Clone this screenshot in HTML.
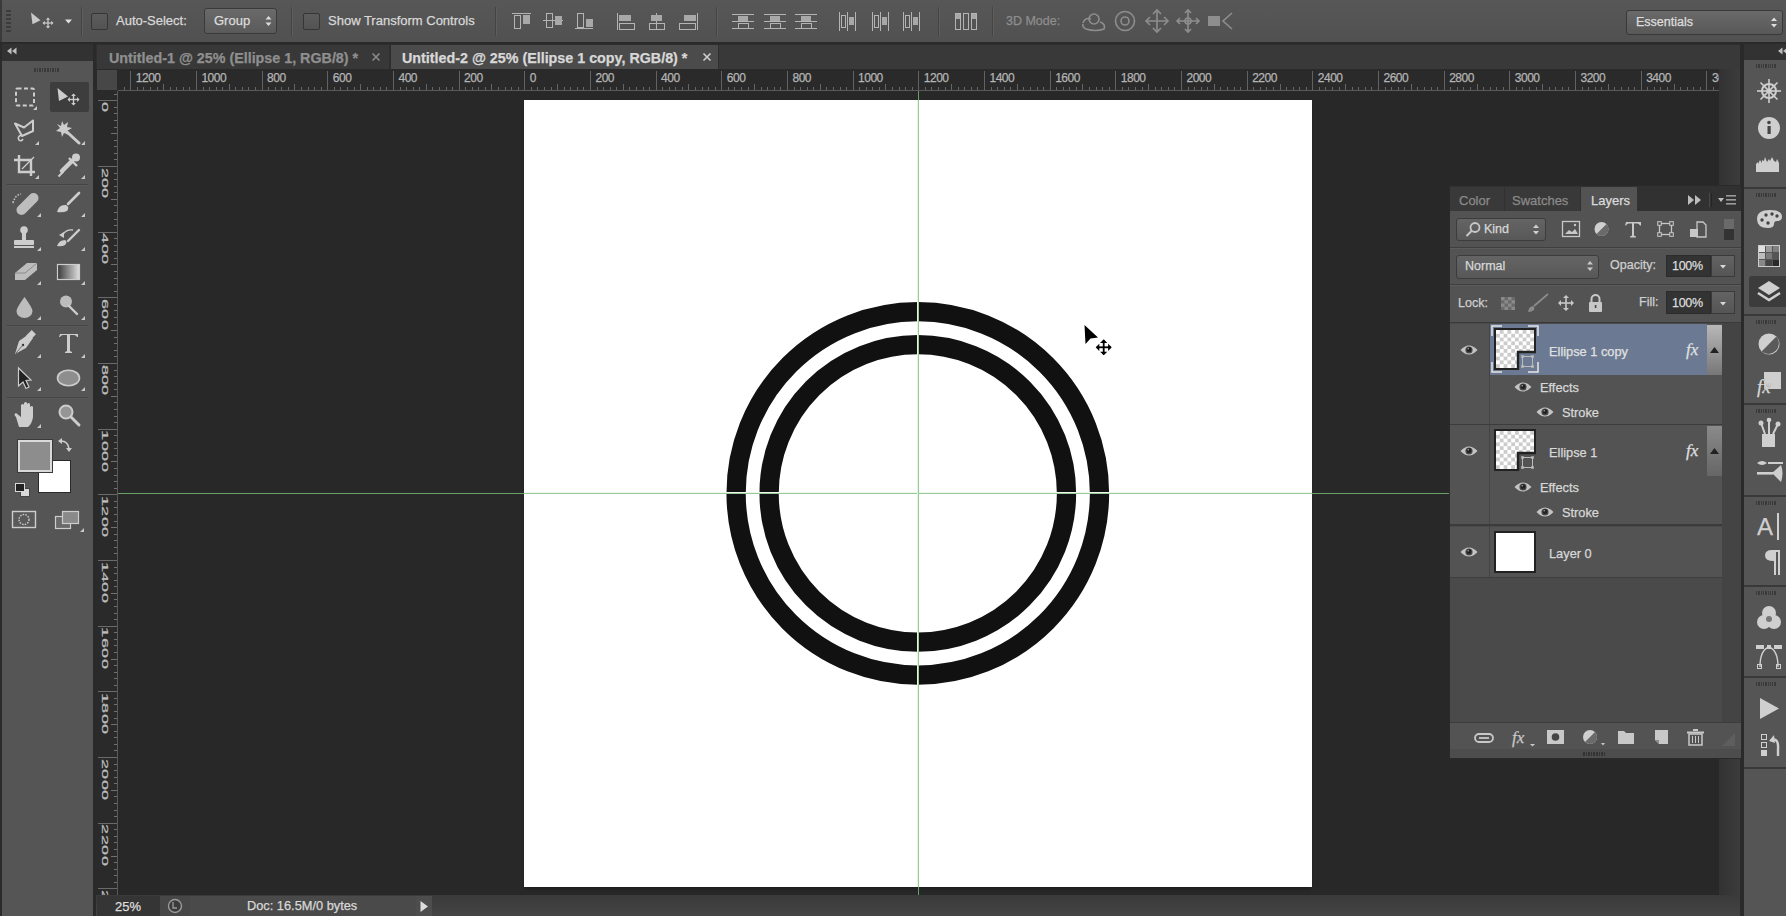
<!DOCTYPE html>
<html><head><meta charset="utf-8">
<style>
*{box-sizing:border-box;margin:0;padding:0}
html,body{width:1786px;height:916px;overflow:hidden;background:#282828;font-family:"Liberation Sans",sans-serif;color:#d6d6d6}
.a{position:absolute}
.t{position:absolute;white-space:nowrap;line-height:1;-webkit-text-stroke:0.25px currentColor}
svg{position:absolute;overflow:visible}
</style></head><body>
<div class="a" style="left:0px;top:0px;width:1786px;height:42px;background:linear-gradient(#575757,#515151);"></div>
<div class="a" style="left:0px;top:0px;width:2px;height:42px;background:#3a3a3a;"></div>
<div class="a" style="left:0px;top:42px;width:1786px;height:2px;background:#2a2a2a;"></div>
<div class="a" style="left:6px;top:10px;width:5px;height:2px;background:#3c3c3c;"></div>
<div class="a" style="left:6px;top:14px;width:5px;height:2px;background:#3c3c3c;"></div>
<div class="a" style="left:6px;top:18px;width:5px;height:2px;background:#3c3c3c;"></div>
<div class="a" style="left:6px;top:22px;width:5px;height:2px;background:#3c3c3c;"></div>
<div class="a" style="left:6px;top:26px;width:5px;height:2px;background:#3c3c3c;"></div>
<div class="a" style="left:6px;top:30px;width:5px;height:2px;background:#3c3c3c;"></div>
<div class="a" style="left:81px;top:7px;width:1px;height:29px;background:#444;"></div>
<div class="a" style="left:82px;top:7px;width:1px;height:29px;background:#5e5e5e;"></div>
<div class="a" style="left:291px;top:7px;width:1px;height:29px;background:#444;"></div>
<div class="a" style="left:292px;top:7px;width:1px;height:29px;background:#5e5e5e;"></div>
<div class="a" style="left:495px;top:7px;width:1px;height:29px;background:#444;"></div>
<div class="a" style="left:496px;top:7px;width:1px;height:29px;background:#5e5e5e;"></div>
<div class="a" style="left:716px;top:7px;width:1px;height:29px;background:#444;"></div>
<div class="a" style="left:717px;top:7px;width:1px;height:29px;background:#5e5e5e;"></div>
<div class="a" style="left:938px;top:7px;width:1px;height:29px;background:#444;"></div>
<div class="a" style="left:939px;top:7px;width:1px;height:29px;background:#5e5e5e;"></div>
<div class="a" style="left:992px;top:7px;width:1px;height:29px;background:#444;"></div>
<div class="a" style="left:993px;top:7px;width:1px;height:29px;background:#5e5e5e;"></div>
<div class="a" style="left:91px;top:13px;width:17px;height:17px;background:linear-gradient(#5c5c5c,#535353);border:1px solid #353535;border-radius:2px"></div>
<div class="a" style="left:303px;top:13px;width:17px;height:17px;background:linear-gradient(#5c5c5c,#535353);border:1px solid #353535;border-radius:2px"></div>
<div class="t" style="left:116px;top:14px;font-size:13px;color:#d8d8d8;font-weight:400;">Auto-Select:</div>
<div class="a" style="left:204px;top:8px;width:73px;height:26px;background:linear-gradient(#6a6a6a,#5a5a5a);border:1px solid #3a3a3a;border-radius:3px"></div>
<div class="t" style="left:214px;top:14px;font-size:13px;color:#dcdcdc;font-weight:400;">Group</div>
<div class="t" style="left:328px;top:14px;font-size:13px;color:#d8d8d8;font-weight:400;">Show Transform Controls</div>
<div class="t" style="left:1006px;top:15px;font-size:12.5px;color:#8e8e8e;font-weight:400;">3D Mode:</div>
<div class="a" style="left:1626px;top:10px;width:157px;height:25px;background:linear-gradient(#6a6a6a,#585858);border:1px solid #383838;border-radius:3px"></div>
<div class="t" style="left:1636px;top:16px;font-size:12.5px;color:#dedede;font-weight:400;">Essentials</div>
<div class="a" style="left:0px;top:44px;width:2px;height:872px;background:#2b2b2b;"></div>
<div class="a" style="left:2px;top:44px;width:91px;height:17px;background:#323232;"></div>
<div class="a" style="left:2px;top:61px;width:91px;height:855px;background:#555555;"></div>
<div class="a" style="left:93px;top:44px;width:3px;height:872px;background:#2a2a2a;"></div>
<div class="a" style="left:34.0px;top:68px;width:1.6px;height:4px;background:#3a3a3a;"></div>
<div class="a" style="left:36.6px;top:68px;width:1.6px;height:4px;background:#3a3a3a;"></div>
<div class="a" style="left:39.2px;top:68px;width:1.6px;height:4px;background:#3a3a3a;"></div>
<div class="a" style="left:41.8px;top:68px;width:1.6px;height:4px;background:#3a3a3a;"></div>
<div class="a" style="left:44.4px;top:68px;width:1.6px;height:4px;background:#3a3a3a;"></div>
<div class="a" style="left:47.0px;top:68px;width:1.6px;height:4px;background:#3a3a3a;"></div>
<div class="a" style="left:49.6px;top:68px;width:1.6px;height:4px;background:#3a3a3a;"></div>
<div class="a" style="left:52.2px;top:68px;width:1.6px;height:4px;background:#3a3a3a;"></div>
<div class="a" style="left:54.8px;top:68px;width:1.6px;height:4px;background:#3a3a3a;"></div>
<div class="a" style="left:57.400000000000006px;top:68px;width:1.6px;height:4px;background:#3a3a3a;"></div>
<div class="a" style="left:50px;top:82px;width:39px;height:30px;background:#3d3d3d;border-radius:2px"></div>
<div class="a" style="left:7px;top:184px;width:81px;height:1px;background:#444;"></div>
<div class="a" style="left:7px;top:185px;width:81px;height:1px;background:#5a5a5a;"></div>
<div class="a" style="left:7px;top:325px;width:81px;height:1px;background:#444;"></div>
<div class="a" style="left:7px;top:326px;width:81px;height:1px;background:#5a5a5a;"></div>
<div class="a" style="left:7px;top:397px;width:81px;height:1px;background:#444;"></div>
<div class="a" style="left:7px;top:398px;width:81px;height:1px;background:#5a5a5a;"></div>
<div class="a" style="left:96px;top:44px;width:1644px;height:25px;background:#393939;"></div>
<div class="a" style="left:96px;top:44px;width:1644px;height:1px;background:#2e2e2e;"></div>
<div class="a" style="left:96px;top:44px;width:1px;height:25px;background:#2e2e2e;"></div>
<div class="a" style="left:97px;top:45px;width:292px;height:24px;background:#383838;"></div>
<div class="a" style="left:389px;top:45px;width:2px;height:24px;background:#2f2f2f;"></div>
<div class="a" style="left:391px;top:45px;width:327px;height:24px;background:#4b4b4b;"></div>
<div class="a" style="left:718px;top:45px;width:1px;height:24px;background:#2f2f2f;"></div>
<div class="t" style="left:109px;top:51px;font-size:14.3px;color:#8f8f8f;font-weight:700;">Untitled-1 @ 25% (Ellipse 1, RGB/8) *</div>
<div class="t" style="left:402px;top:51px;font-size:14.3px;color:#d8d8d8;font-weight:700;">Untitled-2 @ 25% (Ellipse 1 copy, RGB/8) *</div>
<div class="a" style="left:96px;top:69px;width:1623px;height:22px;background:#2a2a2a;"></div>
<div class="a" style="left:97px;top:70px;width:20px;height:20px;background:#474747;"></div>
<div class="a" style="left:96px;top:91px;width:22px;height:804px;background:#2a2a2a;"></div>
<div class="a" style="left:118px;top:90px;width:1601px;height:1px;background:#5a5a5a;"></div>
<div class="a" style="left:117px;top:91px;width:1px;height:804px;background:#5a5a5a;"></div>
<div class="a" style="left:123.71px;top:87px;width:1px;height:3px;background:#666666;"></div>
<div class="a" style="left:130.28px;top:71px;width:1px;height:19px;background:#626262;"></div>
<div class="a" style="left:136.85px;top:87px;width:1px;height:3px;background:#666666;"></div>
<div class="a" style="left:143.41px;top:87px;width:1px;height:3px;background:#666666;"></div>
<div class="a" style="left:149.98px;top:87px;width:1px;height:3px;background:#666666;"></div>
<div class="a" style="left:156.55px;top:87px;width:1px;height:3px;background:#666666;"></div>
<div class="a" style="left:163.11px;top:84px;width:1px;height:6px;background:#666666;"></div>
<div class="a" style="left:169.68px;top:87px;width:1px;height:3px;background:#666666;"></div>
<div class="a" style="left:176.25px;top:87px;width:1px;height:3px;background:#666666;"></div>
<div class="a" style="left:182.82px;top:87px;width:1px;height:3px;background:#666666;"></div>
<div class="a" style="left:189.38px;top:87px;width:1px;height:3px;background:#666666;"></div>
<div class="a" style="left:195.95px;top:71px;width:1px;height:19px;background:#626262;"></div>
<div class="a" style="left:202.52px;top:87px;width:1px;height:3px;background:#666666;"></div>
<div class="a" style="left:209.08px;top:87px;width:1px;height:3px;background:#666666;"></div>
<div class="a" style="left:215.65px;top:87px;width:1px;height:3px;background:#666666;"></div>
<div class="a" style="left:222.22px;top:87px;width:1px;height:3px;background:#666666;"></div>
<div class="a" style="left:228.78px;top:84px;width:1px;height:6px;background:#666666;"></div>
<div class="a" style="left:235.35px;top:87px;width:1px;height:3px;background:#666666;"></div>
<div class="a" style="left:241.92px;top:87px;width:1px;height:3px;background:#666666;"></div>
<div class="a" style="left:248.49px;top:87px;width:1px;height:3px;background:#666666;"></div>
<div class="a" style="left:255.05px;top:87px;width:1px;height:3px;background:#666666;"></div>
<div class="a" style="left:261.62px;top:71px;width:1px;height:19px;background:#626262;"></div>
<div class="a" style="left:268.19px;top:87px;width:1px;height:3px;background:#666666;"></div>
<div class="a" style="left:274.75px;top:87px;width:1px;height:3px;background:#666666;"></div>
<div class="a" style="left:281.32px;top:87px;width:1px;height:3px;background:#666666;"></div>
<div class="a" style="left:287.89px;top:87px;width:1px;height:3px;background:#666666;"></div>
<div class="a" style="left:294.45px;top:84px;width:1px;height:6px;background:#666666;"></div>
<div class="a" style="left:301.02px;top:87px;width:1px;height:3px;background:#666666;"></div>
<div class="a" style="left:307.59px;top:87px;width:1px;height:3px;background:#666666;"></div>
<div class="a" style="left:314.16px;top:87px;width:1px;height:3px;background:#666666;"></div>
<div class="a" style="left:320.72px;top:87px;width:1px;height:3px;background:#666666;"></div>
<div class="a" style="left:327.29px;top:71px;width:1px;height:19px;background:#626262;"></div>
<div class="a" style="left:333.86px;top:87px;width:1px;height:3px;background:#666666;"></div>
<div class="a" style="left:340.42px;top:87px;width:1px;height:3px;background:#666666;"></div>
<div class="a" style="left:346.99px;top:87px;width:1px;height:3px;background:#666666;"></div>
<div class="a" style="left:353.56px;top:87px;width:1px;height:3px;background:#666666;"></div>
<div class="a" style="left:360.12px;top:84px;width:1px;height:6px;background:#666666;"></div>
<div class="a" style="left:366.69px;top:87px;width:1px;height:3px;background:#666666;"></div>
<div class="a" style="left:373.26px;top:87px;width:1px;height:3px;background:#666666;"></div>
<div class="a" style="left:379.83px;top:87px;width:1px;height:3px;background:#666666;"></div>
<div class="a" style="left:386.39px;top:87px;width:1px;height:3px;background:#666666;"></div>
<div class="a" style="left:392.96px;top:71px;width:1px;height:19px;background:#626262;"></div>
<div class="a" style="left:399.53px;top:87px;width:1px;height:3px;background:#666666;"></div>
<div class="a" style="left:406.09px;top:87px;width:1px;height:3px;background:#666666;"></div>
<div class="a" style="left:412.66px;top:87px;width:1px;height:3px;background:#666666;"></div>
<div class="a" style="left:419.23px;top:87px;width:1px;height:3px;background:#666666;"></div>
<div class="a" style="left:425.79px;top:84px;width:1px;height:6px;background:#666666;"></div>
<div class="a" style="left:432.36px;top:87px;width:1px;height:3px;background:#666666;"></div>
<div class="a" style="left:438.93px;top:87px;width:1px;height:3px;background:#666666;"></div>
<div class="a" style="left:445.5px;top:87px;width:1px;height:3px;background:#666666;"></div>
<div class="a" style="left:452.06px;top:87px;width:1px;height:3px;background:#666666;"></div>
<div class="a" style="left:458.63px;top:71px;width:1px;height:19px;background:#626262;"></div>
<div class="a" style="left:465.2px;top:87px;width:1px;height:3px;background:#666666;"></div>
<div class="a" style="left:471.76px;top:87px;width:1px;height:3px;background:#666666;"></div>
<div class="a" style="left:478.33px;top:87px;width:1px;height:3px;background:#666666;"></div>
<div class="a" style="left:484.9px;top:87px;width:1px;height:3px;background:#666666;"></div>
<div class="a" style="left:491.46px;top:84px;width:1px;height:6px;background:#666666;"></div>
<div class="a" style="left:498.03px;top:87px;width:1px;height:3px;background:#666666;"></div>
<div class="a" style="left:504.6px;top:87px;width:1px;height:3px;background:#666666;"></div>
<div class="a" style="left:511.17px;top:87px;width:1px;height:3px;background:#666666;"></div>
<div class="a" style="left:517.73px;top:87px;width:1px;height:3px;background:#666666;"></div>
<div class="a" style="left:524.3px;top:71px;width:1px;height:19px;background:#626262;"></div>
<div class="a" style="left:530.87px;top:87px;width:1px;height:3px;background:#666666;"></div>
<div class="a" style="left:537.43px;top:87px;width:1px;height:3px;background:#666666;"></div>
<div class="a" style="left:544.0px;top:87px;width:1px;height:3px;background:#666666;"></div>
<div class="a" style="left:550.57px;top:87px;width:1px;height:3px;background:#666666;"></div>
<div class="a" style="left:557.13px;top:84px;width:1px;height:6px;background:#666666;"></div>
<div class="a" style="left:563.7px;top:87px;width:1px;height:3px;background:#666666;"></div>
<div class="a" style="left:570.27px;top:87px;width:1px;height:3px;background:#666666;"></div>
<div class="a" style="left:576.84px;top:87px;width:1px;height:3px;background:#666666;"></div>
<div class="a" style="left:583.4px;top:87px;width:1px;height:3px;background:#666666;"></div>
<div class="a" style="left:589.97px;top:71px;width:1px;height:19px;background:#626262;"></div>
<div class="a" style="left:596.54px;top:87px;width:1px;height:3px;background:#666666;"></div>
<div class="a" style="left:603.1px;top:87px;width:1px;height:3px;background:#666666;"></div>
<div class="a" style="left:609.67px;top:87px;width:1px;height:3px;background:#666666;"></div>
<div class="a" style="left:616.24px;top:87px;width:1px;height:3px;background:#666666;"></div>
<div class="a" style="left:622.8px;top:84px;width:1px;height:6px;background:#666666;"></div>
<div class="a" style="left:629.37px;top:87px;width:1px;height:3px;background:#666666;"></div>
<div class="a" style="left:635.94px;top:87px;width:1px;height:3px;background:#666666;"></div>
<div class="a" style="left:642.51px;top:87px;width:1px;height:3px;background:#666666;"></div>
<div class="a" style="left:649.07px;top:87px;width:1px;height:3px;background:#666666;"></div>
<div class="a" style="left:655.64px;top:71px;width:1px;height:19px;background:#626262;"></div>
<div class="a" style="left:662.21px;top:87px;width:1px;height:3px;background:#666666;"></div>
<div class="a" style="left:668.77px;top:87px;width:1px;height:3px;background:#666666;"></div>
<div class="a" style="left:675.34px;top:87px;width:1px;height:3px;background:#666666;"></div>
<div class="a" style="left:681.91px;top:87px;width:1px;height:3px;background:#666666;"></div>
<div class="a" style="left:688.47px;top:84px;width:1px;height:6px;background:#666666;"></div>
<div class="a" style="left:695.04px;top:87px;width:1px;height:3px;background:#666666;"></div>
<div class="a" style="left:701.61px;top:87px;width:1px;height:3px;background:#666666;"></div>
<div class="a" style="left:708.18px;top:87px;width:1px;height:3px;background:#666666;"></div>
<div class="a" style="left:714.74px;top:87px;width:1px;height:3px;background:#666666;"></div>
<div class="a" style="left:721.31px;top:71px;width:1px;height:19px;background:#626262;"></div>
<div class="a" style="left:727.88px;top:87px;width:1px;height:3px;background:#666666;"></div>
<div class="a" style="left:734.44px;top:87px;width:1px;height:3px;background:#666666;"></div>
<div class="a" style="left:741.01px;top:87px;width:1px;height:3px;background:#666666;"></div>
<div class="a" style="left:747.58px;top:87px;width:1px;height:3px;background:#666666;"></div>
<div class="a" style="left:754.14px;top:84px;width:1px;height:6px;background:#666666;"></div>
<div class="a" style="left:760.71px;top:87px;width:1px;height:3px;background:#666666;"></div>
<div class="a" style="left:767.28px;top:87px;width:1px;height:3px;background:#666666;"></div>
<div class="a" style="left:773.85px;top:87px;width:1px;height:3px;background:#666666;"></div>
<div class="a" style="left:780.41px;top:87px;width:1px;height:3px;background:#666666;"></div>
<div class="a" style="left:786.98px;top:71px;width:1px;height:19px;background:#626262;"></div>
<div class="a" style="left:793.55px;top:87px;width:1px;height:3px;background:#666666;"></div>
<div class="a" style="left:800.11px;top:87px;width:1px;height:3px;background:#666666;"></div>
<div class="a" style="left:806.68px;top:87px;width:1px;height:3px;background:#666666;"></div>
<div class="a" style="left:813.25px;top:87px;width:1px;height:3px;background:#666666;"></div>
<div class="a" style="left:819.82px;top:84px;width:1px;height:6px;background:#666666;"></div>
<div class="a" style="left:826.38px;top:87px;width:1px;height:3px;background:#666666;"></div>
<div class="a" style="left:832.95px;top:87px;width:1px;height:3px;background:#666666;"></div>
<div class="a" style="left:839.52px;top:87px;width:1px;height:3px;background:#666666;"></div>
<div class="a" style="left:846.08px;top:87px;width:1px;height:3px;background:#666666;"></div>
<div class="a" style="left:852.65px;top:71px;width:1px;height:19px;background:#626262;"></div>
<div class="a" style="left:859.22px;top:87px;width:1px;height:3px;background:#666666;"></div>
<div class="a" style="left:865.78px;top:87px;width:1px;height:3px;background:#666666;"></div>
<div class="a" style="left:872.35px;top:87px;width:1px;height:3px;background:#666666;"></div>
<div class="a" style="left:878.92px;top:87px;width:1px;height:3px;background:#666666;"></div>
<div class="a" style="left:885.49px;top:84px;width:1px;height:6px;background:#666666;"></div>
<div class="a" style="left:892.05px;top:87px;width:1px;height:3px;background:#666666;"></div>
<div class="a" style="left:898.62px;top:87px;width:1px;height:3px;background:#666666;"></div>
<div class="a" style="left:905.19px;top:87px;width:1px;height:3px;background:#666666;"></div>
<div class="a" style="left:911.75px;top:87px;width:1px;height:3px;background:#666666;"></div>
<div class="a" style="left:918.32px;top:71px;width:1px;height:19px;background:#626262;"></div>
<div class="a" style="left:924.89px;top:87px;width:1px;height:3px;background:#666666;"></div>
<div class="a" style="left:931.45px;top:87px;width:1px;height:3px;background:#666666;"></div>
<div class="a" style="left:938.02px;top:87px;width:1px;height:3px;background:#666666;"></div>
<div class="a" style="left:944.59px;top:87px;width:1px;height:3px;background:#666666;"></div>
<div class="a" style="left:951.15px;top:84px;width:1px;height:6px;background:#666666;"></div>
<div class="a" style="left:957.72px;top:87px;width:1px;height:3px;background:#666666;"></div>
<div class="a" style="left:964.29px;top:87px;width:1px;height:3px;background:#666666;"></div>
<div class="a" style="left:970.86px;top:87px;width:1px;height:3px;background:#666666;"></div>
<div class="a" style="left:977.42px;top:87px;width:1px;height:3px;background:#666666;"></div>
<div class="a" style="left:983.99px;top:71px;width:1px;height:19px;background:#626262;"></div>
<div class="a" style="left:990.56px;top:87px;width:1px;height:3px;background:#666666;"></div>
<div class="a" style="left:997.12px;top:87px;width:1px;height:3px;background:#666666;"></div>
<div class="a" style="left:1003.69px;top:87px;width:1px;height:3px;background:#666666;"></div>
<div class="a" style="left:1010.26px;top:87px;width:1px;height:3px;background:#666666;"></div>
<div class="a" style="left:1016.83px;top:84px;width:1px;height:6px;background:#666666;"></div>
<div class="a" style="left:1023.39px;top:87px;width:1px;height:3px;background:#666666;"></div>
<div class="a" style="left:1029.96px;top:87px;width:1px;height:3px;background:#666666;"></div>
<div class="a" style="left:1036.53px;top:87px;width:1px;height:3px;background:#666666;"></div>
<div class="a" style="left:1043.09px;top:87px;width:1px;height:3px;background:#666666;"></div>
<div class="a" style="left:1049.66px;top:71px;width:1px;height:19px;background:#626262;"></div>
<div class="a" style="left:1056.23px;top:87px;width:1px;height:3px;background:#666666;"></div>
<div class="a" style="left:1062.79px;top:87px;width:1px;height:3px;background:#666666;"></div>
<div class="a" style="left:1069.36px;top:87px;width:1px;height:3px;background:#666666;"></div>
<div class="a" style="left:1075.93px;top:87px;width:1px;height:3px;background:#666666;"></div>
<div class="a" style="left:1082.49px;top:84px;width:1px;height:6px;background:#666666;"></div>
<div class="a" style="left:1089.06px;top:87px;width:1px;height:3px;background:#666666;"></div>
<div class="a" style="left:1095.63px;top:87px;width:1px;height:3px;background:#666666;"></div>
<div class="a" style="left:1102.2px;top:87px;width:1px;height:3px;background:#666666;"></div>
<div class="a" style="left:1108.76px;top:87px;width:1px;height:3px;background:#666666;"></div>
<div class="a" style="left:1115.33px;top:71px;width:1px;height:19px;background:#626262;"></div>
<div class="a" style="left:1121.9px;top:87px;width:1px;height:3px;background:#666666;"></div>
<div class="a" style="left:1128.46px;top:87px;width:1px;height:3px;background:#666666;"></div>
<div class="a" style="left:1135.03px;top:87px;width:1px;height:3px;background:#666666;"></div>
<div class="a" style="left:1141.6px;top:87px;width:1px;height:3px;background:#666666;"></div>
<div class="a" style="left:1148.16px;top:84px;width:1px;height:6px;background:#666666;"></div>
<div class="a" style="left:1154.73px;top:87px;width:1px;height:3px;background:#666666;"></div>
<div class="a" style="left:1161.3px;top:87px;width:1px;height:3px;background:#666666;"></div>
<div class="a" style="left:1167.87px;top:87px;width:1px;height:3px;background:#666666;"></div>
<div class="a" style="left:1174.43px;top:87px;width:1px;height:3px;background:#666666;"></div>
<div class="a" style="left:1181.0px;top:71px;width:1px;height:19px;background:#626262;"></div>
<div class="a" style="left:1187.57px;top:87px;width:1px;height:3px;background:#666666;"></div>
<div class="a" style="left:1194.13px;top:87px;width:1px;height:3px;background:#666666;"></div>
<div class="a" style="left:1200.7px;top:87px;width:1px;height:3px;background:#666666;"></div>
<div class="a" style="left:1207.27px;top:87px;width:1px;height:3px;background:#666666;"></div>
<div class="a" style="left:1213.84px;top:84px;width:1px;height:6px;background:#666666;"></div>
<div class="a" style="left:1220.4px;top:87px;width:1px;height:3px;background:#666666;"></div>
<div class="a" style="left:1226.97px;top:87px;width:1px;height:3px;background:#666666;"></div>
<div class="a" style="left:1233.54px;top:87px;width:1px;height:3px;background:#666666;"></div>
<div class="a" style="left:1240.1px;top:87px;width:1px;height:3px;background:#666666;"></div>
<div class="a" style="left:1246.67px;top:71px;width:1px;height:19px;background:#626262;"></div>
<div class="a" style="left:1253.24px;top:87px;width:1px;height:3px;background:#666666;"></div>
<div class="a" style="left:1259.8px;top:87px;width:1px;height:3px;background:#666666;"></div>
<div class="a" style="left:1266.37px;top:87px;width:1px;height:3px;background:#666666;"></div>
<div class="a" style="left:1272.94px;top:87px;width:1px;height:3px;background:#666666;"></div>
<div class="a" style="left:1279.51px;top:84px;width:1px;height:6px;background:#666666;"></div>
<div class="a" style="left:1286.07px;top:87px;width:1px;height:3px;background:#666666;"></div>
<div class="a" style="left:1292.64px;top:87px;width:1px;height:3px;background:#666666;"></div>
<div class="a" style="left:1299.21px;top:87px;width:1px;height:3px;background:#666666;"></div>
<div class="a" style="left:1305.77px;top:87px;width:1px;height:3px;background:#666666;"></div>
<div class="a" style="left:1312.34px;top:71px;width:1px;height:19px;background:#626262;"></div>
<div class="a" style="left:1318.91px;top:87px;width:1px;height:3px;background:#666666;"></div>
<div class="a" style="left:1325.47px;top:87px;width:1px;height:3px;background:#666666;"></div>
<div class="a" style="left:1332.04px;top:87px;width:1px;height:3px;background:#666666;"></div>
<div class="a" style="left:1338.61px;top:87px;width:1px;height:3px;background:#666666;"></div>
<div class="a" style="left:1345.18px;top:84px;width:1px;height:6px;background:#666666;"></div>
<div class="a" style="left:1351.74px;top:87px;width:1px;height:3px;background:#666666;"></div>
<div class="a" style="left:1358.31px;top:87px;width:1px;height:3px;background:#666666;"></div>
<div class="a" style="left:1364.88px;top:87px;width:1px;height:3px;background:#666666;"></div>
<div class="a" style="left:1371.44px;top:87px;width:1px;height:3px;background:#666666;"></div>
<div class="a" style="left:1378.01px;top:71px;width:1px;height:19px;background:#626262;"></div>
<div class="a" style="left:1384.58px;top:87px;width:1px;height:3px;background:#666666;"></div>
<div class="a" style="left:1391.14px;top:87px;width:1px;height:3px;background:#666666;"></div>
<div class="a" style="left:1397.71px;top:87px;width:1px;height:3px;background:#666666;"></div>
<div class="a" style="left:1404.28px;top:87px;width:1px;height:3px;background:#666666;"></div>
<div class="a" style="left:1410.85px;top:84px;width:1px;height:6px;background:#666666;"></div>
<div class="a" style="left:1417.41px;top:87px;width:1px;height:3px;background:#666666;"></div>
<div class="a" style="left:1423.98px;top:87px;width:1px;height:3px;background:#666666;"></div>
<div class="a" style="left:1430.55px;top:87px;width:1px;height:3px;background:#666666;"></div>
<div class="a" style="left:1437.11px;top:87px;width:1px;height:3px;background:#666666;"></div>
<div class="a" style="left:1443.68px;top:71px;width:1px;height:19px;background:#626262;"></div>
<div class="a" style="left:1450.25px;top:87px;width:1px;height:3px;background:#666666;"></div>
<div class="a" style="left:1456.81px;top:87px;width:1px;height:3px;background:#666666;"></div>
<div class="a" style="left:1463.38px;top:87px;width:1px;height:3px;background:#666666;"></div>
<div class="a" style="left:1469.95px;top:87px;width:1px;height:3px;background:#666666;"></div>
<div class="a" style="left:1476.52px;top:84px;width:1px;height:6px;background:#666666;"></div>
<div class="a" style="left:1483.08px;top:87px;width:1px;height:3px;background:#666666;"></div>
<div class="a" style="left:1489.65px;top:87px;width:1px;height:3px;background:#666666;"></div>
<div class="a" style="left:1496.22px;top:87px;width:1px;height:3px;background:#666666;"></div>
<div class="a" style="left:1502.78px;top:87px;width:1px;height:3px;background:#666666;"></div>
<div class="a" style="left:1509.35px;top:71px;width:1px;height:19px;background:#626262;"></div>
<div class="a" style="left:1515.92px;top:87px;width:1px;height:3px;background:#666666;"></div>
<div class="a" style="left:1522.48px;top:87px;width:1px;height:3px;background:#666666;"></div>
<div class="a" style="left:1529.05px;top:87px;width:1px;height:3px;background:#666666;"></div>
<div class="a" style="left:1535.62px;top:87px;width:1px;height:3px;background:#666666;"></div>
<div class="a" style="left:1542.18px;top:84px;width:1px;height:6px;background:#666666;"></div>
<div class="a" style="left:1548.75px;top:87px;width:1px;height:3px;background:#666666;"></div>
<div class="a" style="left:1555.32px;top:87px;width:1px;height:3px;background:#666666;"></div>
<div class="a" style="left:1561.89px;top:87px;width:1px;height:3px;background:#666666;"></div>
<div class="a" style="left:1568.45px;top:87px;width:1px;height:3px;background:#666666;"></div>
<div class="a" style="left:1575.02px;top:71px;width:1px;height:19px;background:#626262;"></div>
<div class="a" style="left:1581.59px;top:87px;width:1px;height:3px;background:#666666;"></div>
<div class="a" style="left:1588.15px;top:87px;width:1px;height:3px;background:#666666;"></div>
<div class="a" style="left:1594.72px;top:87px;width:1px;height:3px;background:#666666;"></div>
<div class="a" style="left:1601.29px;top:87px;width:1px;height:3px;background:#666666;"></div>
<div class="a" style="left:1607.86px;top:84px;width:1px;height:6px;background:#666666;"></div>
<div class="a" style="left:1614.42px;top:87px;width:1px;height:3px;background:#666666;"></div>
<div class="a" style="left:1620.99px;top:87px;width:1px;height:3px;background:#666666;"></div>
<div class="a" style="left:1627.56px;top:87px;width:1px;height:3px;background:#666666;"></div>
<div class="a" style="left:1634.12px;top:87px;width:1px;height:3px;background:#666666;"></div>
<div class="a" style="left:1640.69px;top:71px;width:1px;height:19px;background:#626262;"></div>
<div class="a" style="left:1647.26px;top:87px;width:1px;height:3px;background:#666666;"></div>
<div class="a" style="left:1653.82px;top:87px;width:1px;height:3px;background:#666666;"></div>
<div class="a" style="left:1660.39px;top:87px;width:1px;height:3px;background:#666666;"></div>
<div class="a" style="left:1666.96px;top:87px;width:1px;height:3px;background:#666666;"></div>
<div class="a" style="left:1673.53px;top:84px;width:1px;height:6px;background:#666666;"></div>
<div class="a" style="left:1680.09px;top:87px;width:1px;height:3px;background:#666666;"></div>
<div class="a" style="left:1686.66px;top:87px;width:1px;height:3px;background:#666666;"></div>
<div class="a" style="left:1693.23px;top:87px;width:1px;height:3px;background:#666666;"></div>
<div class="a" style="left:1699.79px;top:87px;width:1px;height:3px;background:#666666;"></div>
<div class="a" style="left:1706.36px;top:71px;width:1px;height:19px;background:#626262;"></div>
<div class="a" style="left:1712.93px;top:87px;width:1px;height:3px;background:#666666;"></div>
<div class="t" style="left:135.8px;top:72px;font-size:12px;color:#b4b4b4;font-weight:400;letter-spacing:-0.5px">1200</div>
<div class="t" style="left:201.4px;top:72px;font-size:12px;color:#b4b4b4;font-weight:400;letter-spacing:-0.5px">1000</div>
<div class="t" style="left:267.1px;top:72px;font-size:12px;color:#b4b4b4;font-weight:400;letter-spacing:-0.5px">800</div>
<div class="t" style="left:332.8px;top:72px;font-size:12px;color:#b4b4b4;font-weight:400;letter-spacing:-0.5px">600</div>
<div class="t" style="left:398.5px;top:72px;font-size:12px;color:#b4b4b4;font-weight:400;letter-spacing:-0.5px">400</div>
<div class="t" style="left:464.1px;top:72px;font-size:12px;color:#b4b4b4;font-weight:400;letter-spacing:-0.5px">200</div>
<div class="t" style="left:529.8px;top:72px;font-size:12px;color:#b4b4b4;font-weight:400;letter-spacing:-0.5px">0</div>
<div class="t" style="left:595.5px;top:72px;font-size:12px;color:#b4b4b4;font-weight:400;letter-spacing:-0.5px">200</div>
<div class="t" style="left:661.1px;top:72px;font-size:12px;color:#b4b4b4;font-weight:400;letter-spacing:-0.5px">400</div>
<div class="t" style="left:726.8px;top:72px;font-size:12px;color:#b4b4b4;font-weight:400;letter-spacing:-0.5px">600</div>
<div class="t" style="left:792.5px;top:72px;font-size:12px;color:#b4b4b4;font-weight:400;letter-spacing:-0.5px">800</div>
<div class="t" style="left:858.1px;top:72px;font-size:12px;color:#b4b4b4;font-weight:400;letter-spacing:-0.5px">1000</div>
<div class="t" style="left:923.8px;top:72px;font-size:12px;color:#b4b4b4;font-weight:400;letter-spacing:-0.5px">1200</div>
<div class="t" style="left:989.5px;top:72px;font-size:12px;color:#b4b4b4;font-weight:400;letter-spacing:-0.5px">1400</div>
<div class="t" style="left:1055.2px;top:72px;font-size:12px;color:#b4b4b4;font-weight:400;letter-spacing:-0.5px">1600</div>
<div class="t" style="left:1120.8px;top:72px;font-size:12px;color:#b4b4b4;font-weight:400;letter-spacing:-0.5px">1800</div>
<div class="t" style="left:1186.5px;top:72px;font-size:12px;color:#b4b4b4;font-weight:400;letter-spacing:-0.5px">2000</div>
<div class="t" style="left:1252.2px;top:72px;font-size:12px;color:#b4b4b4;font-weight:400;letter-spacing:-0.5px">2200</div>
<div class="t" style="left:1317.8px;top:72px;font-size:12px;color:#b4b4b4;font-weight:400;letter-spacing:-0.5px">2400</div>
<div class="t" style="left:1383.5px;top:72px;font-size:12px;color:#b4b4b4;font-weight:400;letter-spacing:-0.5px">2600</div>
<div class="t" style="left:1449.2px;top:72px;font-size:12px;color:#b4b4b4;font-weight:400;letter-spacing:-0.5px">2800</div>
<div class="t" style="left:1514.8px;top:72px;font-size:12px;color:#b4b4b4;font-weight:400;letter-spacing:-0.5px">3000</div>
<div class="t" style="left:1580.5px;top:72px;font-size:12px;color:#b4b4b4;font-weight:400;letter-spacing:-0.5px">3200</div>
<div class="t" style="left:1646.2px;top:72px;font-size:12px;color:#b4b4b4;font-weight:400;letter-spacing:-0.5px">3400</div>
<div class="t" style="left:1711.9px;top:72px;font-size:12px;color:#b4b4b4;font-weight:400;letter-spacing:-0.5px">3600</div>
<div class="a" style="left:114px;top:93.73px;width:3px;height:1px;background:#707070;"></div>
<div class="a" style="left:98px;top:100.3px;width:19px;height:1px;background:#6a6a6a;"></div>
<div class="a" style="left:114px;top:106.87px;width:3px;height:1px;background:#707070;"></div>
<div class="a" style="left:114px;top:113.43px;width:3px;height:1px;background:#707070;"></div>
<div class="a" style="left:114px;top:120.0px;width:3px;height:1px;background:#707070;"></div>
<div class="a" style="left:114px;top:126.57px;width:3px;height:1px;background:#707070;"></div>
<div class="a" style="left:111px;top:133.13px;width:6px;height:1px;background:#707070;"></div>
<div class="a" style="left:114px;top:139.7px;width:3px;height:1px;background:#707070;"></div>
<div class="a" style="left:114px;top:146.27px;width:3px;height:1px;background:#707070;"></div>
<div class="a" style="left:114px;top:152.84px;width:3px;height:1px;background:#707070;"></div>
<div class="a" style="left:114px;top:159.4px;width:3px;height:1px;background:#707070;"></div>
<div class="a" style="left:98px;top:165.97px;width:19px;height:1px;background:#6a6a6a;"></div>
<div class="a" style="left:114px;top:172.54px;width:3px;height:1px;background:#707070;"></div>
<div class="a" style="left:114px;top:179.1px;width:3px;height:1px;background:#707070;"></div>
<div class="a" style="left:114px;top:185.67px;width:3px;height:1px;background:#707070;"></div>
<div class="a" style="left:114px;top:192.24px;width:3px;height:1px;background:#707070;"></div>
<div class="a" style="left:111px;top:198.81px;width:6px;height:1px;background:#707070;"></div>
<div class="a" style="left:114px;top:205.37px;width:3px;height:1px;background:#707070;"></div>
<div class="a" style="left:114px;top:211.94px;width:3px;height:1px;background:#707070;"></div>
<div class="a" style="left:114px;top:218.51px;width:3px;height:1px;background:#707070;"></div>
<div class="a" style="left:114px;top:225.07px;width:3px;height:1px;background:#707070;"></div>
<div class="a" style="left:98px;top:231.64px;width:19px;height:1px;background:#6a6a6a;"></div>
<div class="a" style="left:114px;top:238.21px;width:3px;height:1px;background:#707070;"></div>
<div class="a" style="left:114px;top:244.77px;width:3px;height:1px;background:#707070;"></div>
<div class="a" style="left:114px;top:251.34px;width:3px;height:1px;background:#707070;"></div>
<div class="a" style="left:114px;top:257.91px;width:3px;height:1px;background:#707070;"></div>
<div class="a" style="left:111px;top:264.48px;width:6px;height:1px;background:#707070;"></div>
<div class="a" style="left:114px;top:271.04px;width:3px;height:1px;background:#707070;"></div>
<div class="a" style="left:114px;top:277.61px;width:3px;height:1px;background:#707070;"></div>
<div class="a" style="left:114px;top:284.18px;width:3px;height:1px;background:#707070;"></div>
<div class="a" style="left:114px;top:290.74px;width:3px;height:1px;background:#707070;"></div>
<div class="a" style="left:98px;top:297.31px;width:19px;height:1px;background:#6a6a6a;"></div>
<div class="a" style="left:114px;top:303.88px;width:3px;height:1px;background:#707070;"></div>
<div class="a" style="left:114px;top:310.44px;width:3px;height:1px;background:#707070;"></div>
<div class="a" style="left:114px;top:317.01px;width:3px;height:1px;background:#707070;"></div>
<div class="a" style="left:114px;top:323.58px;width:3px;height:1px;background:#707070;"></div>
<div class="a" style="left:111px;top:330.15px;width:6px;height:1px;background:#707070;"></div>
<div class="a" style="left:114px;top:336.71px;width:3px;height:1px;background:#707070;"></div>
<div class="a" style="left:114px;top:343.28px;width:3px;height:1px;background:#707070;"></div>
<div class="a" style="left:114px;top:349.85px;width:3px;height:1px;background:#707070;"></div>
<div class="a" style="left:114px;top:356.41px;width:3px;height:1px;background:#707070;"></div>
<div class="a" style="left:98px;top:362.98px;width:19px;height:1px;background:#6a6a6a;"></div>
<div class="a" style="left:114px;top:369.55px;width:3px;height:1px;background:#707070;"></div>
<div class="a" style="left:114px;top:376.11px;width:3px;height:1px;background:#707070;"></div>
<div class="a" style="left:114px;top:382.68px;width:3px;height:1px;background:#707070;"></div>
<div class="a" style="left:114px;top:389.25px;width:3px;height:1px;background:#707070;"></div>
<div class="a" style="left:111px;top:395.82px;width:6px;height:1px;background:#707070;"></div>
<div class="a" style="left:114px;top:402.38px;width:3px;height:1px;background:#707070;"></div>
<div class="a" style="left:114px;top:408.95px;width:3px;height:1px;background:#707070;"></div>
<div class="a" style="left:114px;top:415.52px;width:3px;height:1px;background:#707070;"></div>
<div class="a" style="left:114px;top:422.08px;width:3px;height:1px;background:#707070;"></div>
<div class="a" style="left:98px;top:428.65px;width:19px;height:1px;background:#6a6a6a;"></div>
<div class="a" style="left:114px;top:435.22px;width:3px;height:1px;background:#707070;"></div>
<div class="a" style="left:114px;top:441.78px;width:3px;height:1px;background:#707070;"></div>
<div class="a" style="left:114px;top:448.35px;width:3px;height:1px;background:#707070;"></div>
<div class="a" style="left:114px;top:454.92px;width:3px;height:1px;background:#707070;"></div>
<div class="a" style="left:111px;top:461.49px;width:6px;height:1px;background:#707070;"></div>
<div class="a" style="left:114px;top:468.05px;width:3px;height:1px;background:#707070;"></div>
<div class="a" style="left:114px;top:474.62px;width:3px;height:1px;background:#707070;"></div>
<div class="a" style="left:114px;top:481.19px;width:3px;height:1px;background:#707070;"></div>
<div class="a" style="left:114px;top:487.75px;width:3px;height:1px;background:#707070;"></div>
<div class="a" style="left:98px;top:494.32px;width:19px;height:1px;background:#6a6a6a;"></div>
<div class="a" style="left:114px;top:500.89px;width:3px;height:1px;background:#707070;"></div>
<div class="a" style="left:114px;top:507.45px;width:3px;height:1px;background:#707070;"></div>
<div class="a" style="left:114px;top:514.02px;width:3px;height:1px;background:#707070;"></div>
<div class="a" style="left:114px;top:520.59px;width:3px;height:1px;background:#707070;"></div>
<div class="a" style="left:111px;top:527.15px;width:6px;height:1px;background:#707070;"></div>
<div class="a" style="left:114px;top:533.72px;width:3px;height:1px;background:#707070;"></div>
<div class="a" style="left:114px;top:540.29px;width:3px;height:1px;background:#707070;"></div>
<div class="a" style="left:114px;top:546.86px;width:3px;height:1px;background:#707070;"></div>
<div class="a" style="left:114px;top:553.42px;width:3px;height:1px;background:#707070;"></div>
<div class="a" style="left:98px;top:559.99px;width:19px;height:1px;background:#6a6a6a;"></div>
<div class="a" style="left:114px;top:566.56px;width:3px;height:1px;background:#707070;"></div>
<div class="a" style="left:114px;top:573.12px;width:3px;height:1px;background:#707070;"></div>
<div class="a" style="left:114px;top:579.69px;width:3px;height:1px;background:#707070;"></div>
<div class="a" style="left:114px;top:586.26px;width:3px;height:1px;background:#707070;"></div>
<div class="a" style="left:111px;top:592.83px;width:6px;height:1px;background:#707070;"></div>
<div class="a" style="left:114px;top:599.39px;width:3px;height:1px;background:#707070;"></div>
<div class="a" style="left:114px;top:605.96px;width:3px;height:1px;background:#707070;"></div>
<div class="a" style="left:114px;top:612.53px;width:3px;height:1px;background:#707070;"></div>
<div class="a" style="left:114px;top:619.09px;width:3px;height:1px;background:#707070;"></div>
<div class="a" style="left:98px;top:625.66px;width:19px;height:1px;background:#6a6a6a;"></div>
<div class="a" style="left:114px;top:632.23px;width:3px;height:1px;background:#707070;"></div>
<div class="a" style="left:114px;top:638.79px;width:3px;height:1px;background:#707070;"></div>
<div class="a" style="left:114px;top:645.36px;width:3px;height:1px;background:#707070;"></div>
<div class="a" style="left:114px;top:651.93px;width:3px;height:1px;background:#707070;"></div>
<div class="a" style="left:111px;top:658.5px;width:6px;height:1px;background:#707070;"></div>
<div class="a" style="left:114px;top:665.06px;width:3px;height:1px;background:#707070;"></div>
<div class="a" style="left:114px;top:671.63px;width:3px;height:1px;background:#707070;"></div>
<div class="a" style="left:114px;top:678.2px;width:3px;height:1px;background:#707070;"></div>
<div class="a" style="left:114px;top:684.76px;width:3px;height:1px;background:#707070;"></div>
<div class="a" style="left:98px;top:691.33px;width:19px;height:1px;background:#6a6a6a;"></div>
<div class="a" style="left:114px;top:697.9px;width:3px;height:1px;background:#707070;"></div>
<div class="a" style="left:114px;top:704.46px;width:3px;height:1px;background:#707070;"></div>
<div class="a" style="left:114px;top:711.03px;width:3px;height:1px;background:#707070;"></div>
<div class="a" style="left:114px;top:717.6px;width:3px;height:1px;background:#707070;"></div>
<div class="a" style="left:111px;top:724.16px;width:6px;height:1px;background:#707070;"></div>
<div class="a" style="left:114px;top:730.73px;width:3px;height:1px;background:#707070;"></div>
<div class="a" style="left:114px;top:737.3px;width:3px;height:1px;background:#707070;"></div>
<div class="a" style="left:114px;top:743.87px;width:3px;height:1px;background:#707070;"></div>
<div class="a" style="left:114px;top:750.43px;width:3px;height:1px;background:#707070;"></div>
<div class="a" style="left:98px;top:757.0px;width:19px;height:1px;background:#6a6a6a;"></div>
<div class="a" style="left:114px;top:763.57px;width:3px;height:1px;background:#707070;"></div>
<div class="a" style="left:114px;top:770.13px;width:3px;height:1px;background:#707070;"></div>
<div class="a" style="left:114px;top:776.7px;width:3px;height:1px;background:#707070;"></div>
<div class="a" style="left:114px;top:783.27px;width:3px;height:1px;background:#707070;"></div>
<div class="a" style="left:111px;top:789.84px;width:6px;height:1px;background:#707070;"></div>
<div class="a" style="left:114px;top:796.4px;width:3px;height:1px;background:#707070;"></div>
<div class="a" style="left:114px;top:802.97px;width:3px;height:1px;background:#707070;"></div>
<div class="a" style="left:114px;top:809.54px;width:3px;height:1px;background:#707070;"></div>
<div class="a" style="left:114px;top:816.1px;width:3px;height:1px;background:#707070;"></div>
<div class="a" style="left:98px;top:822.67px;width:19px;height:1px;background:#6a6a6a;"></div>
<div class="a" style="left:114px;top:829.24px;width:3px;height:1px;background:#707070;"></div>
<div class="a" style="left:114px;top:835.8px;width:3px;height:1px;background:#707070;"></div>
<div class="a" style="left:114px;top:842.37px;width:3px;height:1px;background:#707070;"></div>
<div class="a" style="left:114px;top:848.94px;width:3px;height:1px;background:#707070;"></div>
<div class="a" style="left:111px;top:855.5px;width:6px;height:1px;background:#707070;"></div>
<div class="a" style="left:114px;top:862.07px;width:3px;height:1px;background:#707070;"></div>
<div class="a" style="left:114px;top:868.64px;width:3px;height:1px;background:#707070;"></div>
<div class="a" style="left:114px;top:875.21px;width:3px;height:1px;background:#707070;"></div>
<div class="a" style="left:114px;top:881.77px;width:3px;height:1px;background:#707070;"></div>
<div class="a" style="left:98px;top:888.34px;width:19px;height:1px;background:#6a6a6a;"></div>
<div class="a" style="left:114px;top:894.91px;width:3px;height:1px;background:#707070;"></div>
<div class="t" style="left:99.6px;top:102.0px;width:10px;height:10px;line-height:10px;text-align:center;font-size:9px;color:#bdbdbd;transform:rotate(90deg) scaleX(2.0)">0</div>
<div class="t" style="left:99.6px;top:167.67px;width:10px;height:10px;line-height:10px;text-align:center;font-size:9px;color:#bdbdbd;transform:rotate(90deg) scaleX(2.0)">2</div>
<div class="t" style="left:99.6px;top:178.07px;width:10px;height:10px;line-height:10px;text-align:center;font-size:9px;color:#bdbdbd;transform:rotate(90deg) scaleX(2.0)">0</div>
<div class="t" style="left:99.6px;top:188.47px;width:10px;height:10px;line-height:10px;text-align:center;font-size:9px;color:#bdbdbd;transform:rotate(90deg) scaleX(2.0)">0</div>
<div class="t" style="left:99.6px;top:233.34px;width:10px;height:10px;line-height:10px;text-align:center;font-size:9px;color:#bdbdbd;transform:rotate(90deg) scaleX(2.0)">4</div>
<div class="t" style="left:99.6px;top:243.74px;width:10px;height:10px;line-height:10px;text-align:center;font-size:9px;color:#bdbdbd;transform:rotate(90deg) scaleX(2.0)">0</div>
<div class="t" style="left:99.6px;top:254.14px;width:10px;height:10px;line-height:10px;text-align:center;font-size:9px;color:#bdbdbd;transform:rotate(90deg) scaleX(2.0)">0</div>
<div class="t" style="left:99.6px;top:299.01px;width:10px;height:10px;line-height:10px;text-align:center;font-size:9px;color:#bdbdbd;transform:rotate(90deg) scaleX(2.0)">6</div>
<div class="t" style="left:99.6px;top:309.41px;width:10px;height:10px;line-height:10px;text-align:center;font-size:9px;color:#bdbdbd;transform:rotate(90deg) scaleX(2.0)">0</div>
<div class="t" style="left:99.6px;top:319.81px;width:10px;height:10px;line-height:10px;text-align:center;font-size:9px;color:#bdbdbd;transform:rotate(90deg) scaleX(2.0)">0</div>
<div class="t" style="left:99.6px;top:364.68px;width:10px;height:10px;line-height:10px;text-align:center;font-size:9px;color:#bdbdbd;transform:rotate(90deg) scaleX(2.0)">8</div>
<div class="t" style="left:99.6px;top:375.08px;width:10px;height:10px;line-height:10px;text-align:center;font-size:9px;color:#bdbdbd;transform:rotate(90deg) scaleX(2.0)">0</div>
<div class="t" style="left:99.6px;top:385.48px;width:10px;height:10px;line-height:10px;text-align:center;font-size:9px;color:#bdbdbd;transform:rotate(90deg) scaleX(2.0)">0</div>
<div class="t" style="left:99.6px;top:430.35px;width:10px;height:10px;line-height:10px;text-align:center;font-size:9px;color:#bdbdbd;transform:rotate(90deg) scaleX(2.0)">1</div>
<div class="t" style="left:99.6px;top:440.75px;width:10px;height:10px;line-height:10px;text-align:center;font-size:9px;color:#bdbdbd;transform:rotate(90deg) scaleX(2.0)">0</div>
<div class="t" style="left:99.6px;top:451.15px;width:10px;height:10px;line-height:10px;text-align:center;font-size:9px;color:#bdbdbd;transform:rotate(90deg) scaleX(2.0)">0</div>
<div class="t" style="left:99.6px;top:461.55px;width:10px;height:10px;line-height:10px;text-align:center;font-size:9px;color:#bdbdbd;transform:rotate(90deg) scaleX(2.0)">0</div>
<div class="t" style="left:99.6px;top:496.02px;width:10px;height:10px;line-height:10px;text-align:center;font-size:9px;color:#bdbdbd;transform:rotate(90deg) scaleX(2.0)">1</div>
<div class="t" style="left:99.6px;top:506.42px;width:10px;height:10px;line-height:10px;text-align:center;font-size:9px;color:#bdbdbd;transform:rotate(90deg) scaleX(2.0)">2</div>
<div class="t" style="left:99.6px;top:516.82px;width:10px;height:10px;line-height:10px;text-align:center;font-size:9px;color:#bdbdbd;transform:rotate(90deg) scaleX(2.0)">0</div>
<div class="t" style="left:99.6px;top:527.22px;width:10px;height:10px;line-height:10px;text-align:center;font-size:9px;color:#bdbdbd;transform:rotate(90deg) scaleX(2.0)">0</div>
<div class="t" style="left:99.6px;top:561.69px;width:10px;height:10px;line-height:10px;text-align:center;font-size:9px;color:#bdbdbd;transform:rotate(90deg) scaleX(2.0)">1</div>
<div class="t" style="left:99.6px;top:572.09px;width:10px;height:10px;line-height:10px;text-align:center;font-size:9px;color:#bdbdbd;transform:rotate(90deg) scaleX(2.0)">4</div>
<div class="t" style="left:99.6px;top:582.49px;width:10px;height:10px;line-height:10px;text-align:center;font-size:9px;color:#bdbdbd;transform:rotate(90deg) scaleX(2.0)">0</div>
<div class="t" style="left:99.6px;top:592.89px;width:10px;height:10px;line-height:10px;text-align:center;font-size:9px;color:#bdbdbd;transform:rotate(90deg) scaleX(2.0)">0</div>
<div class="t" style="left:99.6px;top:627.36px;width:10px;height:10px;line-height:10px;text-align:center;font-size:9px;color:#bdbdbd;transform:rotate(90deg) scaleX(2.0)">1</div>
<div class="t" style="left:99.6px;top:637.76px;width:10px;height:10px;line-height:10px;text-align:center;font-size:9px;color:#bdbdbd;transform:rotate(90deg) scaleX(2.0)">6</div>
<div class="t" style="left:99.6px;top:648.16px;width:10px;height:10px;line-height:10px;text-align:center;font-size:9px;color:#bdbdbd;transform:rotate(90deg) scaleX(2.0)">0</div>
<div class="t" style="left:99.6px;top:658.56px;width:10px;height:10px;line-height:10px;text-align:center;font-size:9px;color:#bdbdbd;transform:rotate(90deg) scaleX(2.0)">0</div>
<div class="t" style="left:99.6px;top:693.03px;width:10px;height:10px;line-height:10px;text-align:center;font-size:9px;color:#bdbdbd;transform:rotate(90deg) scaleX(2.0)">1</div>
<div class="t" style="left:99.6px;top:703.43px;width:10px;height:10px;line-height:10px;text-align:center;font-size:9px;color:#bdbdbd;transform:rotate(90deg) scaleX(2.0)">8</div>
<div class="t" style="left:99.6px;top:713.83px;width:10px;height:10px;line-height:10px;text-align:center;font-size:9px;color:#bdbdbd;transform:rotate(90deg) scaleX(2.0)">0</div>
<div class="t" style="left:99.6px;top:724.23px;width:10px;height:10px;line-height:10px;text-align:center;font-size:9px;color:#bdbdbd;transform:rotate(90deg) scaleX(2.0)">0</div>
<div class="t" style="left:99.6px;top:758.7px;width:10px;height:10px;line-height:10px;text-align:center;font-size:9px;color:#bdbdbd;transform:rotate(90deg) scaleX(2.0)">2</div>
<div class="t" style="left:99.6px;top:769.1px;width:10px;height:10px;line-height:10px;text-align:center;font-size:9px;color:#bdbdbd;transform:rotate(90deg) scaleX(2.0)">0</div>
<div class="t" style="left:99.6px;top:779.5px;width:10px;height:10px;line-height:10px;text-align:center;font-size:9px;color:#bdbdbd;transform:rotate(90deg) scaleX(2.0)">0</div>
<div class="t" style="left:99.6px;top:789.9px;width:10px;height:10px;line-height:10px;text-align:center;font-size:9px;color:#bdbdbd;transform:rotate(90deg) scaleX(2.0)">0</div>
<div class="t" style="left:99.6px;top:824.37px;width:10px;height:10px;line-height:10px;text-align:center;font-size:9px;color:#bdbdbd;transform:rotate(90deg) scaleX(2.0)">2</div>
<div class="t" style="left:99.6px;top:834.77px;width:10px;height:10px;line-height:10px;text-align:center;font-size:9px;color:#bdbdbd;transform:rotate(90deg) scaleX(2.0)">2</div>
<div class="t" style="left:99.6px;top:845.17px;width:10px;height:10px;line-height:10px;text-align:center;font-size:9px;color:#bdbdbd;transform:rotate(90deg) scaleX(2.0)">0</div>
<div class="t" style="left:99.6px;top:855.57px;width:10px;height:10px;line-height:10px;text-align:center;font-size:9px;color:#bdbdbd;transform:rotate(90deg) scaleX(2.0)">0</div>
<div class="t" style="left:99.6px;top:890.04px;width:10px;height:10px;line-height:10px;text-align:center;font-size:9px;color:#bdbdbd;transform:rotate(90deg) scaleX(2.0)">2</div>
<div class="t" style="left:99.6px;top:900.44px;width:10px;height:10px;line-height:10px;text-align:center;font-size:9px;color:#bdbdbd;transform:rotate(90deg) scaleX(2.0)">4</div>
<div class="t" style="left:99.6px;top:910.84px;width:10px;height:10px;line-height:10px;text-align:center;font-size:9px;color:#bdbdbd;transform:rotate(90deg) scaleX(2.0)">0</div>
<div class="t" style="left:99.6px;top:921.24px;width:10px;height:10px;line-height:10px;text-align:center;font-size:9px;color:#bdbdbd;transform:rotate(90deg) scaleX(2.0)">0</div>
<div class="a" style="left:118px;top:91px;width:1601px;height:804px;background:#282828;"></div>
<div class="a" style="left:524px;top:100px;width:788px;height:787px;background:#fff;box-shadow:0 3px 3px -1px rgba(0,0,0,.3)"></div>
<svg style="left:0px;top:0px;" width="1786" height="916" viewBox="0 0 1786 916"><circle cx="917.8" cy="493.4" r="181.7" fill="none" stroke="#111" stroke-width="19.3"/><circle cx="917.8" cy="493.4" r="148.7" fill="none" stroke="#111" stroke-width="19.3"/></svg>
<div class="a" style="left:118px;top:493px;width:406px;height:1px;background:#68a068;"></div>
<div class="a" style="left:524px;top:492px;width:788px;height:1px;background:#eaf7ea;"></div>
<div class="a" style="left:524px;top:493px;width:788px;height:1px;background:#98c998;"></div>
<div class="a" style="left:1312px;top:493px;width:137px;height:1px;background:#68a068;"></div>
<div class="a" style="left:918px;top:91px;width:1px;height:9px;background:#68a068;"></div>
<div class="a" style="left:917px;top:100px;width:1px;height:787px;background:#e6f6e6;"></div>
<div class="a" style="left:918px;top:100px;width:1px;height:787px;background:#98c998;"></div>
<div class="a" style="left:918px;top:887px;width:1px;height:8px;background:#68a068;"></div>
<div class="a" style="left:1719px;top:69px;width:21px;height:826px;background:linear-gradient(90deg,#323232,#3c3c3c);"></div>
<div class="a" style="left:1719px;top:895px;width:21px;height:21px;background:#474747;"></div>
<div class="a" style="left:96px;top:895px;width:1644px;height:21px;background:linear-gradient(#3a3a3a,#444);"></div>
<div class="a" style="left:97px;top:896px;width:63px;height:20px;background:#353535;"></div>
<div class="a" style="left:160px;top:896px;width:30px;height:20px;background:#474747;"></div>
<div class="a" style="left:190px;top:896px;width:226px;height:20px;background:#4a4a4a;"></div>
<div class="a" style="left:416px;top:896px;width:16px;height:20px;background:#4d4d4d;"></div>
<div class="t" style="left:115px;top:900px;font-size:13px;color:#dedede;font-weight:400;">25%</div>
<div class="t" style="left:247px;top:900px;font-size:12.8px;color:#d8d8d8;font-weight:400;">Doc: 16.5M/0 bytes</div>
<div class="a" style="left:1740px;top:44px;width:4px;height:872px;background:#2a2a2a;"></div>
<div class="a" style="left:1744px;top:44px;width:42px;height:16px;background:#323232;"></div>
<div class="a" style="left:1744px;top:60px;width:42px;height:856px;background:#555555;"></div>
<div class="a" style="left:1744px;top:187px;width:42px;height:2px;background:#393939;"></div>
<div class="a" style="left:1744px;top:314px;width:42px;height:2px;background:#393939;"></div>
<div class="a" style="left:1744px;top:403px;width:42px;height:2px;background:#393939;"></div>
<div class="a" style="left:1744px;top:495px;width:42px;height:2px;background:#393939;"></div>
<div class="a" style="left:1744px;top:585px;width:42px;height:2px;background:#393939;"></div>
<div class="a" style="left:1744px;top:676px;width:42px;height:2px;background:#393939;"></div>
<div class="a" style="left:1744px;top:767px;width:42px;height:2px;background:#393939;"></div>
<div class="a" style="left:1449px;top:185px;width:293px;height:574px;background:#2a2a2a;"></div>
<div class="a" style="left:1450px;top:186px;width:291px;height:25px;background:#313131;"></div>
<div class="a" style="left:1450px;top:187px;width:54px;height:24px;background:#393939;"></div>
<div class="a" style="left:1505px;top:187px;width:75px;height:24px;background:#393939;"></div>
<div class="a" style="left:1581px;top:187px;width:56px;height:24px;background:#535353;"></div>
<div class="t" style="left:1459px;top:194px;font-size:13px;color:#8a8a8a;font-weight:400;">Color</div>
<div class="t" style="left:1512px;top:194px;font-size:13px;color:#8a8a8a;font-weight:400;">Swatches</div>
<div class="t" style="left:1591px;top:194px;font-size:13px;color:#dcdcdc;font-weight:400;">Layers</div>
<div class="a" style="left:1450px;top:211px;width:291px;height:512px;background:#535353;"></div>
<div class="a" style="left:1450px;top:723px;width:291px;height:26px;background:#535353;"></div>
<div class="a" style="left:1450px;top:749px;width:291px;height:9px;background:#4d4d4d;"></div>
<svg style="left:0px;top:0px;" width="1" height="1" viewBox="0 0 1 1"><polygon points="31,12.5 40.5,20.3 32.5,24.2" fill="#c8c8c8"/><g fill="#c8c8c8" stroke="#c8c8c8" stroke-width="1.3"><line x1="43.5" y1="23" x2="52.5" y2="23"/><line x1="48" y1="18.5" x2="48" y2="27.5"/><polygon stroke="none" points="42.5,23 44.7,20.8 44.7,25.2"/><polygon stroke="none" points="53.5,23 51.3,20.8 51.3,25.2"/><polygon stroke="none" points="48,17.5 45.8,19.7 50.2,19.7"/><polygon stroke="none" points="48,28.5 45.8,26.3 50.2,26.3"/></g></svg>
<svg style="left:0px;top:0px;" width="1" height="1" viewBox="0 0 1 1"><polygon points="65,19.5 72,19.5 68.5,23.5" fill="#e0e0e0"/></svg>
<svg style="left:0px;top:0px;" width="1" height="1" viewBox="0 0 1 1"><polygon points="265.5,19.5 271.5,19.5 268.5,16" fill="#dcdcdc"/><polygon points="265.5,22.5 271.5,22.5 268.5,26" fill="#dcdcdc"/></svg>
<svg style="left:0px;top:0px;" width="1" height="1" viewBox="0 0 1 1"><polygon points="1771,21.0 1777,21.0 1774,17.5" fill="#dcdcdc"/><polygon points="1771,24.0 1777,24.0 1774,27.5" fill="#dcdcdc"/></svg>
<svg style="left:0px;top:0px;" width="1" height="1" viewBox="0 0 1 1"><line x1="512" y1="13.5" x2="531" y2="13.5" stroke="#b4b4b4"/><rect x="514.5" y="15.5" width="6" height="13" fill="none" stroke="#b4b4b4" stroke-width="1"/><rect x="523" y="15" width="7" height="9" fill="#a8a8a8" stroke="none" stroke-width="1"/><line x1="543" y1="20.5" x2="563" y2="20.5" stroke="#b4b4b4"/><rect x="546.5" y="13.5" width="6" height="14" fill="none" stroke="#b4b4b4" stroke-width="1"/><rect x="555" y="16" width="7" height="9" fill="#a8a8a8" stroke="none" stroke-width="1"/><line x1="575" y1="28.5" x2="593" y2="28.5" stroke="#b4b4b4"/><rect x="577.5" y="13.5" width="6" height="14" fill="none" stroke="#b4b4b4" stroke-width="1"/><rect x="586" y="19" width="7" height="8" fill="#a8a8a8" stroke="none" stroke-width="1"/><line x1="617.5" y1="13" x2="617.5" y2="30" stroke="#b4b4b4"/><rect x="619" y="15" width="12" height="6" fill="#a8a8a8" stroke="none" stroke-width="1"/><rect x="619.5" y="23.5" width="15" height="6" fill="none" stroke="#b4b4b4" stroke-width="1"/><line x1="656.5" y1="13" x2="656.5" y2="30" stroke="#b4b4b4"/><rect x="651" y="15" width="11" height="6" fill="#a8a8a8" stroke="none" stroke-width="1"/><rect x="649.5" y="23.5" width="15" height="6" fill="none" stroke="#b4b4b4" stroke-width="1"/><line x1="697.5" y1="13" x2="697.5" y2="30" stroke="#b4b4b4"/><rect x="684" y="15" width="12" height="6" fill="#a8a8a8" stroke="none" stroke-width="1"/><rect x="679.5" y="23.5" width="16" height="6" fill="none" stroke="#b4b4b4" stroke-width="1"/><line x1="732" y1="14.5" x2="754" y2="14.5" stroke="#b4b4b4"/><line x1="732" y1="21.5" x2="754" y2="21.5" stroke="#b4b4b4"/><line x1="732" y1="28.5" x2="754" y2="28.5" stroke="#b4b4b4"/><rect x="738" y="16" width="10" height="5" fill="#a8a8a8" stroke="none" stroke-width="1"/><rect x="738.5" y="23.5" width="10" height="5" fill="none" stroke="#b4b4b4" stroke-width="1"/><line x1="764" y1="14.5" x2="786" y2="14.5" stroke="#b4b4b4"/><line x1="764" y1="21.5" x2="786" y2="21.5" stroke="#b4b4b4"/><line x1="764" y1="28.5" x2="786" y2="28.5" stroke="#b4b4b4"/><rect x="770" y="16" width="10" height="5" fill="#a8a8a8" stroke="none" stroke-width="1"/><rect x="770.5" y="23.5" width="10" height="5" fill="none" stroke="#b4b4b4" stroke-width="1"/><line x1="795" y1="14.5" x2="817" y2="14.5" stroke="#b4b4b4"/><line x1="795" y1="21.5" x2="817" y2="21.5" stroke="#b4b4b4"/><line x1="795" y1="28.5" x2="817" y2="28.5" stroke="#b4b4b4"/><rect x="801" y="16" width="10" height="5" fill="#a8a8a8" stroke="none" stroke-width="1"/><rect x="801.5" y="23.5" width="10" height="5" fill="none" stroke="#b4b4b4" stroke-width="1"/><line x1="839.5" y1="12" x2="839.5" y2="31" stroke="#b4b4b4"/><line x1="847.5" y1="12" x2="847.5" y2="31" stroke="#b4b4b4"/><line x1="855.5" y1="12" x2="855.5" y2="31" stroke="#b4b4b4"/><rect x="841.5" y="15.5" width="4" height="12" fill="none" stroke="#b4b4b4" stroke-width="1"/><rect x="849" y="17" width="5" height="8" fill="#a8a8a8" stroke="none" stroke-width="1"/><line x1="872.5" y1="12" x2="872.5" y2="31" stroke="#b4b4b4"/><line x1="880.5" y1="12" x2="880.5" y2="31" stroke="#b4b4b4"/><line x1="888.5" y1="12" x2="888.5" y2="31" stroke="#b4b4b4"/><rect x="874.5" y="15.5" width="4" height="12" fill="none" stroke="#b4b4b4" stroke-width="1"/><rect x="882" y="17" width="5" height="8" fill="#a8a8a8" stroke="none" stroke-width="1"/><line x1="903.5" y1="12" x2="903.5" y2="31" stroke="#b4b4b4"/><line x1="911.5" y1="12" x2="911.5" y2="31" stroke="#b4b4b4"/><line x1="919.5" y1="12" x2="919.5" y2="31" stroke="#b4b4b4"/><rect x="905.5" y="15.5" width="4" height="12" fill="none" stroke="#b4b4b4" stroke-width="1"/><rect x="913" y="17" width="5" height="8" fill="#a8a8a8" stroke="none" stroke-width="1"/><rect x="955.5" y="13.5" width="5" height="16" fill="none" stroke="#b4b4b4" stroke-width="1"/><rect x="963.5" y="13.5" width="5" height="16" fill="none" stroke="#b4b4b4" stroke-width="1"/><rect x="971.5" y="13.5" width="5" height="16" fill="none" stroke="#b4b4b4" stroke-width="1"/><rect x="956" y="14" width="4" height="5" fill="#a8a8a8" stroke="none" stroke-width="1"/><rect x="972" y="14" width="4" height="5" fill="#a8a8a8" stroke="none" stroke-width="1"/></svg>
<svg style="left:0px;top:0px;" width="1" height="1" viewBox="0 0 1 1"><g fill="none" stroke="#8e8e8e" stroke-width="1.6"><circle cx="1094" cy="19" r="5"/><path d="M1083,23 q2,-6 8,-4 M1100,22 q6,2 4,7 q-8,3 -18,0 q-4,-2 -3,-5"/><circle cx="1125" cy="21" r="9.5"/><circle cx="1125" cy="21" r="4"/><path d="M1157,10 v22 M1146,21 h22"/><path d="M1153,14 l4,-4 4,4 M1153,28 l4,4 4,-4 M1150,17 l-4,4 4,4 M1164,17 l4,4 -4,4"/><circle cx="1188" cy="21" r="3"/><path d="M1178,21 h20 M1188,11 v20 M1185,13 l3,-3 3,3 M1185,29 l3,3 3,-3 M1180,18 l-3,3 3,3 M1196,18 l3,3 -3,3"/></g><rect x="1208" y="16" width="12" height="10" fill="#8e8e8e"/><path d="M1232,13 l-9,8 9,8" fill="none" stroke="#8e8e8e" stroke-width="1.6"/></svg>
<svg style="left:0px;top:0px;" width="1" height="1" viewBox="0 0 1 1"><path d="M372.5,53.5 l7,7 M379.5,53.5 l-7,7" stroke="#8a8a8a" stroke-width="1.6"/><path d="M703.5,53.5 l7,7 M710.5,53.5 l-7,7" stroke="#cfcfcf" stroke-width="1.6"/></svg>
<svg style="left:0px;top:0px;" width="1" height="1" viewBox="0 0 1 1"><polygon points="7,51 11.5,47.5 11.5,54.5" fill="#bdbdbd"/><polygon points="12,51 16.5,47.5 16.5,54.5" fill="#bdbdbd"/></svg>
<svg style="left:0px;top:0px;" width="1" height="1" viewBox="0 0 1 1"><polygon points="1778,51 1782.5,47.5 1782.5,54.5" fill="#bdbdbd"/><polygon points="1783,51 1787.5,47.5 1787.5,54.5" fill="#bdbdbd"/></svg>
<svg style="left:0px;top:0px;" width="1" height="1" viewBox="0 0 1 1"><rect x="16" y="88.5" width="18" height="17" rx="1.5" fill="none" stroke="#cdcdcd" stroke-width="2" stroke-dasharray="4,2.5"/><polygon points="33,110 37,110 37,106" fill="#c8c8c8"/><polygon points="57.5,88 68,96.5 59,101" fill="#cdcdcd"/><g fill="#cdcdcd" stroke="#cdcdcd" stroke-width="1.4"><line x1="68.5" y1="99.5" x2="78.5" y2="99.5"/><line x1="73.5" y1="94.5" x2="73.5" y2="104.5"/><polygon stroke="none" points="67.5,99.5 69.9,97.1 69.9,101.9"/><polygon stroke="none" points="79.5,99.5 77.1,97.1 77.1,101.9"/><polygon stroke="none" points="73.5,93.5 71.1,95.9 75.9,95.9"/><polygon stroke="none" points="73.5,105.5 71.1,103.1 75.9,103.1"/></g><path d="M15,123.5 L22,136 L33,131 L33,120.5 L24,127.5 Z" fill="none" stroke="#cdcdcd" stroke-width="2" stroke-linejoin="round"/><path d="M21,135 q-4,2 -2,5 q2,2 4,-1" fill="none" stroke="#cdcdcd" stroke-width="1.6"/><polygon points="35,145 39,145 39,141" fill="#c8c8c8"/><polygon points="62,121 64,125 68,122 67,127 72,128 67,131 69,135 64,133 62,137 61,132 56,131 60,128 57,124 61,126" fill="#cdcdcd"/><line x1="67" y1="132" x2="79" y2="143" stroke="#cdcdcd" stroke-width="3" stroke-linecap="round"/><polygon points="81,145 85,145 85,141" fill="#c8c8c8"/><path d="M19,155 v17 h16 M14,160 h17 v16" fill="none" stroke="#cdcdcd" stroke-width="2.4"/><line x1="22" y1="169" x2="34" y2="157" stroke="#cdcdcd" stroke-width="1.2"/><polygon points="35,179 39,179 39,175" fill="#c8c8c8"/><path d="M62,171 l10,-10" stroke="#cdcdcd" stroke-width="4.5" stroke-linecap="round"/><path d="M58.5,176.5 l5,-5" stroke="#cdcdcd" stroke-width="2"/><circle cx="76" cy="157.5" r="4" fill="#cdcdcd"/><line x1="69" y1="158" x2="77" y2="166" stroke="#cdcdcd" stroke-width="2.4"/><polygon points="81,179 85,179 85,175" fill="#c8c8c8"/><rect x="14" y="199" width="27" height="10" rx="5" transform="rotate(-45 27.5 204)" fill="#bdbdbd"/><path d="M13,203 q2,-8 8,-9" fill="none" stroke="#cdcdcd" stroke-width="1.5" stroke-dasharray="1.5,1.5"/><polygon points="37,217 41,217 41,213" fill="#c8c8c8"/><path d="M68,204 L79,193" stroke="#cdcdcd" stroke-width="2.6" stroke-linecap="round"/><path d="M57,212 q2,-8 9,-7 q4,2 1,6 q-4,2 -10,1z" fill="#cdcdcd"/><polygon points="81,217 85,217 85,213" fill="#c8c8c8"/><circle cx="24" cy="230" r="3.8" fill="#cdcdcd"/><rect x="22" y="232" width="4" height="8" fill="#cdcdcd"/><rect x="14" y="240" width="20" height="5" rx="1" fill="#cdcdcd"/><rect x="14" y="246" width="20" height="2" fill="#cdcdcd"/><polygon points="37,251 41,251 41,247" fill="#c8c8c8"/><path d="M68,241 L79,230" stroke="#cdcdcd" stroke-width="2.4" stroke-linecap="round"/><path d="M57,246 q2,-6 8,-6 q3,2 0,5 q-3,2 -8,1z" fill="#cdcdcd"/><path d="M63,234 q4,-5 10,-4" fill="none" stroke="#cdcdcd" stroke-width="1.4"/><polygon points="59,235 64,232 64,238" fill="#cdcdcd"/><polygon points="81,251 85,251 85,247" fill="#c8c8c8"/><polygon points="15,273 27,263 37,263 37,270 25,280 15,280" fill="#bdbdbd"/><line x1="15" y1="273" x2="25" y2="273" stroke="#8a8a8a" stroke-width="1"/><line x1="25" y1="273" x2="37" y2="263" stroke="#8a8a8a" stroke-width="1"/><polygon points="37,285 41,285 41,281" fill="#c8c8c8"/><defs><linearGradient id="gr" x1="0" x2="1"><stop offset="0" stop-color="#3a3a3a"/><stop offset="1" stop-color="#e0e0e0"/></linearGradient></defs><rect x="57.5" y="264.5" width="22" height="15" fill="url(#gr)" stroke="#cdcdcd" stroke-width="1.2"/><polygon points="81,285 85,285 85,281" fill="#c8c8c8"/><path d="M24.5,297 q-8,11 -8,14 a8,7 0 0 0 16,0 q0,-3 -8,-14z" fill="#bdbdbd"/><polygon points="37,320 41,320 41,316" fill="#c8c8c8"/><circle cx="66" cy="301.5" r="6" fill="#bdbdbd"/><line x1="69" y1="306" x2="77" y2="314" stroke="#cdcdcd" stroke-width="2.4" stroke-linecap="round"/><polygon points="81,320 85,320 85,316" fill="#c8c8c8"/><path d="M15,354 l4,-13 l10,-7 l4,4 l-7,10z" fill="#cdcdcd"/><rect x="28" y="331" width="6" height="8" transform="rotate(45 31 335)" fill="#cdcdcd"/><circle cx="23" cy="345" r="1.2" fill="#333"/><line x1="16" y1="353" x2="23" y2="345" stroke="#555" stroke-width="0.8"/><polygon points="37,358 41,358 41,354" fill="#c8c8c8"/><path d="M60,334 h18 v3 h-1 q-1,-2 -3,-2 h-4 v16 l2,1 v1 h-7 v-1 l2,-1 v-16 h-4 q-2,0 -3,2 h-1z" fill="#cdcdcd"/><polygon points="81,358 85,358 85,354" fill="#c8c8c8"/><polygon points="18.5,368 31,380 26,380.5 29,387 26,388.5 23,382 18.5,386" fill="#222" stroke="#cdcdcd" stroke-width="1.2"/><polygon points="37,391 41,391 41,387" fill="#c8c8c8"/><ellipse cx="68.5" cy="378" rx="11" ry="7.8" fill="#8e8e8e" stroke="#cdcdcd" stroke-width="1.6"/><polygon points="81,391 85,391 85,387" fill="#c8c8c8"/><path d="M16,417 q-3,-3 0,-4 l5,4 v-12 q2,-2 3,0 v8 v-10 q2,-2 3,0 v10 v-9 q2,-2 3,0 v9 v-6 q2,-2 3,0 v10 q-1,7 -5,10 h-9z" fill="#cdcdcd"/><polygon points="37,428 41,428 41,424" fill="#c8c8c8"/><circle cx="66" cy="412" r="6.5" fill="#959595" stroke="#cdcdcd" stroke-width="2"/><line x1="71" y1="417" x2="79" y2="425" stroke="#cdcdcd" stroke-width="3" stroke-linecap="round"/></svg>
<div class="a" style="left:38px;top:460px;width:33px;height:33px;background:#ffffff;border:1px solid #2a2a2a"></div>
<div class="a" style="left:18px;top:440px;width:34px;height:32px;background:#8d8d8d;border:2px solid #dadada;outline:1px solid #3a3a3a"></div>
<svg style="left:0px;top:0px;" width="1" height="1" viewBox="0 0 1 1"><path d="M61,441 q7,0 8,8" fill="none" stroke="#cdcdcd" stroke-width="1.6"/><polygon points="58,441 62,438 62,444" fill="#cdcdcd"/><polygon points="69,452 66,448 72,448" fill="#cdcdcd"/><rect x="20.5" y="488.5" width="9" height="8" fill="#d8d8d8" stroke="#444"/><rect x="15.5" y="483.5" width="9" height="8" fill="#222" stroke="#d8d8d8"/></svg>
<svg style="left:0px;top:0px;" width="1" height="1" viewBox="0 0 1 1"><rect x="12.5" y="511.5" width="23" height="16" fill="#5a5a5a" stroke="#cdcdcd" stroke-width="1.4"/><circle cx="24" cy="519.5" r="5" fill="none" stroke="#cdcdcd" stroke-width="1.4" stroke-dasharray="1.5,1.2"/><rect x="55.5" y="516.5" width="15" height="12" fill="#6a6a6a" stroke="#cdcdcd" stroke-width="1.2"/><rect x="62.5" y="511.5" width="16" height="12" fill="#8a8a8a" stroke="#cdcdcd" stroke-width="1.2"/><polygon points="80,532 84,532 84,528" fill="#c8c8c8"/></svg>
<svg style="left:0px;top:0px;" width="1" height="1" viewBox="0 0 1 1"><polygon points="1688,195 1694,200 1688,205" fill="#bdbdbd"/><polygon points="1695,195 1701,200 1695,205" fill="#bdbdbd"/><rect x="1709" y="193" width="1" height="14" fill="#484848"/><rect x="1711" y="193" width="1" height="14" fill="#252525"/><polygon points="1718,198 1724,198 1721,202" fill="#bdbdbd"/><rect x="1726" y="195" width="10" height="1.6" fill="#9a9a9a"/><rect x="1726" y="199" width="10" height="1.6" fill="#9a9a9a"/><rect x="1726" y="203" width="10" height="1.6" fill="#9a9a9a"/></svg>
<div class="a" style="left:1456px;top:218px;width:90px;height:23px;background:linear-gradient(#646464,#585858);border:1px solid #3c3c3c;border-radius:3px"></div>
<svg style="left:0px;top:0px;" width="1" height="1" viewBox="0 0 1 1"><circle cx="1475" cy="227.5" r="4.5" fill="none" stroke="#c8c8c8" stroke-width="1.8"/><line x1="1471.5" y1="231" x2="1466.5" y2="236" stroke="#c8c8c8" stroke-width="2"/><polygon points="1533,228.0 1539,228.0 1536,224.5" fill="#d0d0d0"/><polygon points="1533,231.0 1539,231.0 1536,234.5" fill="#d0d0d0"/></svg>
<div class="t" style="left:1484px;top:223px;font-size:12.5px;color:#d8d8d8;font-weight:400;">Kind</div>
<svg style="left:0px;top:0px;" width="1" height="1" viewBox="0 0 1 1"><rect x="1562.5" y="221.5" width="17" height="15" fill="none" stroke="#c8c8c8" stroke-width="1.3"/><path d="M1565,234 l4,-4 3,2 3,-3 3,5z" fill="#c8c8c8"/><circle cx="1575" cy="225" r="1.2" fill="#c8c8c8"/><circle cx="1601.5" cy="229" r="7" fill="#cfcfcf"/><path d="M1596.5,234 L1606.5,224 A7,7 0 0 1 1596.5,234z" fill="#6a6a6a"/><path d="M1626,222 h15 v3.5 h-1 q-1,-2 -3,-2 h-3 v12 l2,1 v1 h-6 v-1 l2,-1 v-12 h-3 q-2,0 -3,2 h-1z" fill="#c8c8c8"/><rect x="1659.5" y="223.5" width="12" height="11" fill="none" stroke="#c8c8c8" stroke-width="1.3"/><rect x="1657.7" y="221.7" width="3.6" height="3.6" fill="#555" stroke="#c8c8c8" stroke-width="1"/><rect x="1669.7" y="221.7" width="3.6" height="3.6" fill="#555" stroke="#c8c8c8" stroke-width="1"/><rect x="1657.7" y="232.7" width="3.6" height="3.6" fill="#555" stroke="#c8c8c8" stroke-width="1"/><rect x="1669.7" y="232.7" width="3.6" height="3.6" fill="#555" stroke="#c8c8c8" stroke-width="1"/><path d="M1697,222 h6 l3,3 v12 h-9z" fill="none" stroke="#c8c8c8" stroke-width="1.3"/><rect x="1690" y="229" width="8" height="8" fill="#c8c8c8"/><rect x="1724" y="219" width="10" height="10" fill="#6a6a6a"/><rect x="1724" y="229" width="10" height="11" fill="#333"/></svg>
<div class="a" style="left:1450px;top:247px;width:291px;height:1px;background:#3f3f3f;"></div>
<div class="a" style="left:1450px;top:248px;width:291px;height:1px;background:#5c5c5c;"></div>
<div class="a" style="left:1456px;top:255px;width:143px;height:24px;background:linear-gradient(#646464,#585858);border:1px solid #3c3c3c;border-radius:3px"></div>
<div class="t" style="left:1465px;top:260px;font-size:12.5px;color:#d8d8d8;font-weight:400;">Normal</div>
<svg style="left:0px;top:0px;" width="1" height="1" viewBox="0 0 1 1"><polygon points="1587,264.5 1593,264.5 1590,261" fill="#c8c8c8"/><polygon points="1587,267.5 1593,267.5 1590,271" fill="#c8c8c8"/></svg>
<div class="t" style="left:1610px;top:259px;font-size:12.5px;color:#d0d0d0;font-weight:400;">Opacity:</div>
<div class="a" style="left:1666px;top:255px;width:45px;height:22px;background:#333333;border:1px solid #2c2c2c"></div>
<div class="a" style="left:1711px;top:255px;width:24px;height:22px;background:linear-gradient(#636363,#555);border:1px solid #3a3a3a"></div>
<div class="t" style="left:1672px;top:260px;font-size:12.5px;color:#dcdcdc;font-weight:400;letter-spacing:-0.3px">100%</div>
<div class="a" style="left:1450px;top:284px;width:291px;height:1px;background:#3f3f3f;"></div>
<div class="a" style="left:1450px;top:285px;width:291px;height:1px;background:#5c5c5c;"></div>
<div class="t" style="left:1458px;top:297px;font-size:12.5px;color:#d0d0d0;font-weight:400;">Lock:</div>
<svg style="left:0px;top:0px;" width="1" height="1" viewBox="0 0 1 1"><rect x="1501" y="297" width="14" height="13" fill="#6a6a6a"/><rect x="1501.0" y="297.0" width="3.5" height="3.25" fill="#8a8a8a"/><rect x="1501.0" y="303.5" width="3.5" height="3.25" fill="#8a8a8a"/><rect x="1504.5" y="300.25" width="3.5" height="3.25" fill="#8a8a8a"/><rect x="1504.5" y="306.75" width="3.5" height="3.25" fill="#8a8a8a"/><rect x="1508.0" y="297.0" width="3.5" height="3.25" fill="#8a8a8a"/><rect x="1508.0" y="303.5" width="3.5" height="3.25" fill="#8a8a8a"/><rect x="1511.5" y="300.25" width="3.5" height="3.25" fill="#8a8a8a"/><rect x="1511.5" y="306.75" width="3.5" height="3.25" fill="#8a8a8a"/><path d="M1528,312 q1,-6 5,-6 q2,1 1,4 q-2,2 -6,2z" fill="#8a8a8a"/><line x1="1534" y1="306" x2="1548" y2="294" stroke="#8a8a8a" stroke-width="1.8"/><g fill="#c8c8c8" stroke="#c8c8c8" stroke-width="1.6"><line x1="1559" y1="303" x2="1573" y2="303"/><line x1="1566" y1="296" x2="1566" y2="310"/><polygon stroke="none" points="1558,303 1561,300 1561,306"/><polygon stroke="none" points="1574,303 1571,300 1571,306"/><polygon stroke="none" points="1566,295 1563,298 1569,298"/><polygon stroke="none" points="1566,311 1563,308 1569,308"/></g><rect x="1589" y="302" width="13" height="10" rx="1" fill="#c8c8c8"/><path d="M1591.5,302 v-3 a4,4 0 0 1 8,0 v3" fill="none" stroke="#c8c8c8" stroke-width="2"/><rect x="1594.8" y="305" width="1.6" height="3" fill="#444"/></svg>
<div class="t" style="left:1639px;top:296px;font-size:12.5px;color:#d0d0d0;font-weight:400;">Fill:</div>
<div class="a" style="left:1666px;top:291px;width:45px;height:23px;background:#333333;border:1px solid #2c2c2c"></div>
<div class="a" style="left:1711px;top:291px;width:24px;height:23px;background:linear-gradient(#636363,#555);border:1px solid #3a3a3a"></div>
<div class="t" style="left:1672px;top:297px;font-size:12.5px;color:#dcdcdc;font-weight:400;letter-spacing:-0.3px">100%</div>
<svg style="left:0px;top:0px;" width="1" height="1" viewBox="0 0 1 1"><polygon points="1720,265 1726,265 1723,268.5" fill="#d8d8d8"/><polygon points="1720,302 1726,302 1723,305.5" fill="#d8d8d8"/></svg>
<div class="a" style="left:1450px;top:322px;width:291px;height:2px;background:#3a3a3a;"></div>
<div class="a" style="left:1450px;top:323px;width:272px;height:400px;background:#4a4a4a;"></div>
<div class="a" style="left:1722px;top:323px;width:19px;height:400px;background:#444444;"></div>
<div class="a" style="left:1450px;top:324px;width:272px;height:101px;background:#535353;"></div>
<div class="a" style="left:1489px;top:324px;width:1px;height:101px;background:#444;"></div>
<div class="a" style="left:1490px;top:324px;width:217px;height:51px;background:#6b7a92;"></div>
<div class="a" style="left:1707px;top:325px;width:15px;height:50px;background:linear-gradient(#b8b8b8,#777);"></div>
<svg style="left:0px;top:0px;" width="1" height="1" viewBox="0 0 1 1"><path d="M1460.5,350 q8.5,-9 17,0 q-8.5,9 -17,0z" fill="#c4c4c4"/><circle cx="1469" cy="350" r="3.6" fill="#4a4a4a"/><circle cx="1469" cy="349.7" r="2.4" fill="#222"/><circle cx="1468.2" cy="348.7" r="0.8" fill="#aaa"/><rect x="1494" y="328" width="42" height="42" fill="#222"/><rect x="1496" y="330" width="38" height="38" fill="#ffffff"/><rect x="1496.0" y="333.8" width="3.8" height="3.8" fill="#cccccc"/><rect x="1496.0" y="341.4" width="3.8" height="3.8" fill="#cccccc"/><rect x="1496.0" y="349.0" width="3.8" height="3.8" fill="#cccccc"/><rect x="1496.0" y="356.6" width="3.8" height="3.8" fill="#cccccc"/><rect x="1496.0" y="364.2" width="3.8" height="3.8" fill="#cccccc"/><rect x="1499.8" y="330.0" width="3.8" height="3.8" fill="#cccccc"/><rect x="1499.8" y="337.6" width="3.8" height="3.8" fill="#cccccc"/><rect x="1499.8" y="345.2" width="3.8" height="3.8" fill="#cccccc"/><rect x="1499.8" y="352.8" width="3.8" height="3.8" fill="#cccccc"/><rect x="1499.8" y="360.4" width="3.8" height="3.8" fill="#cccccc"/><rect x="1503.6" y="333.8" width="3.8" height="3.8" fill="#cccccc"/><rect x="1503.6" y="341.4" width="3.8" height="3.8" fill="#cccccc"/><rect x="1503.6" y="349.0" width="3.8" height="3.8" fill="#cccccc"/><rect x="1503.6" y="356.6" width="3.8" height="3.8" fill="#cccccc"/><rect x="1503.6" y="364.2" width="3.8" height="3.8" fill="#cccccc"/><rect x="1507.4" y="330.0" width="3.8" height="3.8" fill="#cccccc"/><rect x="1507.4" y="337.6" width="3.8" height="3.8" fill="#cccccc"/><rect x="1507.4" y="345.2" width="3.8" height="3.8" fill="#cccccc"/><rect x="1507.4" y="352.8" width="3.8" height="3.8" fill="#cccccc"/><rect x="1507.4" y="360.4" width="3.8" height="3.8" fill="#cccccc"/><rect x="1511.2" y="333.8" width="3.8" height="3.8" fill="#cccccc"/><rect x="1511.2" y="341.4" width="3.8" height="3.8" fill="#cccccc"/><rect x="1511.2" y="349.0" width="3.8" height="3.8" fill="#cccccc"/><rect x="1511.2" y="356.6" width="3.8" height="3.8" fill="#cccccc"/><rect x="1511.2" y="364.2" width="3.8" height="3.8" fill="#cccccc"/><rect x="1515.0" y="330.0" width="3.8" height="3.8" fill="#cccccc"/><rect x="1515.0" y="337.6" width="3.8" height="3.8" fill="#cccccc"/><rect x="1515.0" y="345.2" width="3.8" height="3.8" fill="#cccccc"/><rect x="1515.0" y="352.8" width="3.8" height="3.8" fill="#cccccc"/><rect x="1515.0" y="360.4" width="3.8" height="3.8" fill="#cccccc"/><rect x="1518.8" y="333.8" width="3.8" height="3.8" fill="#cccccc"/><rect x="1518.8" y="341.4" width="3.8" height="3.8" fill="#cccccc"/><rect x="1518.8" y="349.0" width="3.8" height="3.8" fill="#cccccc"/><rect x="1518.8" y="356.6" width="3.8" height="3.8" fill="#cccccc"/><rect x="1518.8" y="364.2" width="3.8" height="3.8" fill="#cccccc"/><rect x="1522.6" y="330.0" width="3.8" height="3.8" fill="#cccccc"/><rect x="1522.6" y="337.6" width="3.8" height="3.8" fill="#cccccc"/><rect x="1522.6" y="345.2" width="3.8" height="3.8" fill="#cccccc"/><rect x="1522.6" y="352.8" width="3.8" height="3.8" fill="#cccccc"/><rect x="1522.6" y="360.4" width="3.8" height="3.8" fill="#cccccc"/><rect x="1526.4" y="333.8" width="3.8" height="3.8" fill="#cccccc"/><rect x="1526.4" y="341.4" width="3.8" height="3.8" fill="#cccccc"/><rect x="1526.4" y="349.0" width="3.8" height="3.8" fill="#cccccc"/><rect x="1526.4" y="356.6" width="3.8" height="3.8" fill="#cccccc"/><rect x="1526.4" y="364.2" width="3.8" height="3.8" fill="#cccccc"/><rect x="1530.2" y="330.0" width="3.8" height="3.8" fill="#cccccc"/><rect x="1530.2" y="337.6" width="3.8" height="3.8" fill="#cccccc"/><rect x="1530.2" y="345.2" width="3.8" height="3.8" fill="#cccccc"/><rect x="1530.2" y="352.8" width="3.8" height="3.8" fill="#cccccc"/><rect x="1530.2" y="360.4" width="3.8" height="3.8" fill="#cccccc"/><rect x="1518" y="352" width="18" height="18" fill="#6b7a92"/><path d="M1518,370 v-18 h18" fill="none" stroke="#222" stroke-width="2.4"/><rect x="1522.5" y="356.5" width="10" height="10" fill="none" stroke="#bbb" stroke-width="1"/><rect x="1521.2" y="355.2" width="2.6" height="2.6" fill="#bbb"/><rect x="1531.2" y="355.2" width="2.6" height="2.6" fill="#bbb"/><rect x="1521.2" y="365.2" width="2.6" height="2.6" fill="#bbb"/><rect x="1531.2" y="365.2" width="2.6" height="2.6" fill="#bbb"/><path d="M1492,336 v-10 h10 M1528,326 h10 v10 M1538,362 v10 h-10 M1502,372 h-10 v-10" fill="none" stroke="#e8e8e8" stroke-width="1.5"/><polygon points="1710,353 1719,353 1714.5,347" fill="#222"/><path d="M1514.5,387 q8.5,-9 17,0 q-8.5,9 -17,0z" fill="#c4c4c4"/><circle cx="1523" cy="387" r="3.6" fill="#4a4a4a"/><circle cx="1523" cy="386.7" r="2.4" fill="#222"/><circle cx="1522.2" cy="385.7" r="0.8" fill="#aaa"/><path d="M1536.5,412 q8.5,-9 17,0 q-8.5,9 -17,0z" fill="#c4c4c4"/><circle cx="1545" cy="412" r="3.6" fill="#4a4a4a"/><circle cx="1545" cy="411.7" r="2.4" fill="#222"/><circle cx="1544.2" cy="410.7" r="0.8" fill="#aaa"/></svg>
<div class="t" style="left:1549px;top:346px;font-size:12.8px;color:#e0e0e0;font-weight:400;">Ellipse 1 copy</div>
<div class="t" style="left:1686px;top:341px;font-size:17px;font-style:italic;font-family:'Liberation Serif',serif;color:#e0e0e0">fx</div>
<div class="t" style="left:1540px;top:382px;font-size:12.8px;color:#d8d8d8;font-weight:400;">Effects</div>
<div class="t" style="left:1562px;top:407px;font-size:12.8px;color:#d8d8d8;font-weight:400;">Stroke</div>
<div class="a" style="left:1450px;top:424px;width:272px;height:2px;background:#3c3c3c;"></div>
<div class="a" style="left:1450px;top:425px;width:272px;height:100px;background:#535353;"></div>
<div class="a" style="left:1489px;top:425px;width:1px;height:100px;background:#444;"></div>
<div class="a" style="left:1707px;top:426px;width:15px;height:50px;background:linear-gradient(#8a8a8a,#666);"></div>
<svg style="left:0px;top:0px;" width="1" height="1" viewBox="0 0 1 1"><path d="M1460.5,451 q8.5,-9 17,0 q-8.5,9 -17,0z" fill="#c4c4c4"/><circle cx="1469" cy="451" r="3.6" fill="#4a4a4a"/><circle cx="1469" cy="450.7" r="2.4" fill="#222"/><circle cx="1468.2" cy="449.7" r="0.8" fill="#aaa"/><rect x="1494" y="429" width="42" height="42" fill="#222"/><rect x="1496" y="431" width="38" height="38" fill="#ffffff"/><rect x="1496.0" y="434.8" width="3.8" height="3.8" fill="#cccccc"/><rect x="1496.0" y="442.4" width="3.8" height="3.8" fill="#cccccc"/><rect x="1496.0" y="450.0" width="3.8" height="3.8" fill="#cccccc"/><rect x="1496.0" y="457.6" width="3.8" height="3.8" fill="#cccccc"/><rect x="1496.0" y="465.2" width="3.8" height="3.8" fill="#cccccc"/><rect x="1499.8" y="431.0" width="3.8" height="3.8" fill="#cccccc"/><rect x="1499.8" y="438.6" width="3.8" height="3.8" fill="#cccccc"/><rect x="1499.8" y="446.2" width="3.8" height="3.8" fill="#cccccc"/><rect x="1499.8" y="453.8" width="3.8" height="3.8" fill="#cccccc"/><rect x="1499.8" y="461.4" width="3.8" height="3.8" fill="#cccccc"/><rect x="1503.6" y="434.8" width="3.8" height="3.8" fill="#cccccc"/><rect x="1503.6" y="442.4" width="3.8" height="3.8" fill="#cccccc"/><rect x="1503.6" y="450.0" width="3.8" height="3.8" fill="#cccccc"/><rect x="1503.6" y="457.6" width="3.8" height="3.8" fill="#cccccc"/><rect x="1503.6" y="465.2" width="3.8" height="3.8" fill="#cccccc"/><rect x="1507.4" y="431.0" width="3.8" height="3.8" fill="#cccccc"/><rect x="1507.4" y="438.6" width="3.8" height="3.8" fill="#cccccc"/><rect x="1507.4" y="446.2" width="3.8" height="3.8" fill="#cccccc"/><rect x="1507.4" y="453.8" width="3.8" height="3.8" fill="#cccccc"/><rect x="1507.4" y="461.4" width="3.8" height="3.8" fill="#cccccc"/><rect x="1511.2" y="434.8" width="3.8" height="3.8" fill="#cccccc"/><rect x="1511.2" y="442.4" width="3.8" height="3.8" fill="#cccccc"/><rect x="1511.2" y="450.0" width="3.8" height="3.8" fill="#cccccc"/><rect x="1511.2" y="457.6" width="3.8" height="3.8" fill="#cccccc"/><rect x="1511.2" y="465.2" width="3.8" height="3.8" fill="#cccccc"/><rect x="1515.0" y="431.0" width="3.8" height="3.8" fill="#cccccc"/><rect x="1515.0" y="438.6" width="3.8" height="3.8" fill="#cccccc"/><rect x="1515.0" y="446.2" width="3.8" height="3.8" fill="#cccccc"/><rect x="1515.0" y="453.8" width="3.8" height="3.8" fill="#cccccc"/><rect x="1515.0" y="461.4" width="3.8" height="3.8" fill="#cccccc"/><rect x="1518.8" y="434.8" width="3.8" height="3.8" fill="#cccccc"/><rect x="1518.8" y="442.4" width="3.8" height="3.8" fill="#cccccc"/><rect x="1518.8" y="450.0" width="3.8" height="3.8" fill="#cccccc"/><rect x="1518.8" y="457.6" width="3.8" height="3.8" fill="#cccccc"/><rect x="1518.8" y="465.2" width="3.8" height="3.8" fill="#cccccc"/><rect x="1522.6" y="431.0" width="3.8" height="3.8" fill="#cccccc"/><rect x="1522.6" y="438.6" width="3.8" height="3.8" fill="#cccccc"/><rect x="1522.6" y="446.2" width="3.8" height="3.8" fill="#cccccc"/><rect x="1522.6" y="453.8" width="3.8" height="3.8" fill="#cccccc"/><rect x="1522.6" y="461.4" width="3.8" height="3.8" fill="#cccccc"/><rect x="1526.4" y="434.8" width="3.8" height="3.8" fill="#cccccc"/><rect x="1526.4" y="442.4" width="3.8" height="3.8" fill="#cccccc"/><rect x="1526.4" y="450.0" width="3.8" height="3.8" fill="#cccccc"/><rect x="1526.4" y="457.6" width="3.8" height="3.8" fill="#cccccc"/><rect x="1526.4" y="465.2" width="3.8" height="3.8" fill="#cccccc"/><rect x="1530.2" y="431.0" width="3.8" height="3.8" fill="#cccccc"/><rect x="1530.2" y="438.6" width="3.8" height="3.8" fill="#cccccc"/><rect x="1530.2" y="446.2" width="3.8" height="3.8" fill="#cccccc"/><rect x="1530.2" y="453.8" width="3.8" height="3.8" fill="#cccccc"/><rect x="1530.2" y="461.4" width="3.8" height="3.8" fill="#cccccc"/><rect x="1518" y="453" width="18" height="18" fill="#535353"/><path d="M1518,471 v-18 h18" fill="none" stroke="#222" stroke-width="2.4"/><rect x="1522.5" y="457.5" width="10" height="10" fill="none" stroke="#bbb" stroke-width="1"/><rect x="1521.2" y="456.2" width="2.6" height="2.6" fill="#bbb"/><rect x="1531.2" y="456.2" width="2.6" height="2.6" fill="#bbb"/><rect x="1521.2" y="466.2" width="2.6" height="2.6" fill="#bbb"/><rect x="1531.2" y="466.2" width="2.6" height="2.6" fill="#bbb"/><polygon points="1710,454 1719,454 1714.5,448" fill="#222"/><path d="M1514.5,487 q8.5,-9 17,0 q-8.5,9 -17,0z" fill="#c4c4c4"/><circle cx="1523" cy="487" r="3.6" fill="#4a4a4a"/><circle cx="1523" cy="486.7" r="2.4" fill="#222"/><circle cx="1522.2" cy="485.7" r="0.8" fill="#aaa"/><path d="M1536.5,512 q8.5,-9 17,0 q-8.5,9 -17,0z" fill="#c4c4c4"/><circle cx="1545" cy="512" r="3.6" fill="#4a4a4a"/><circle cx="1545" cy="511.7" r="2.4" fill="#222"/><circle cx="1544.2" cy="510.7" r="0.8" fill="#aaa"/></svg>
<div class="t" style="left:1549px;top:447px;font-size:12.8px;color:#d8d8d8;font-weight:400;">Ellipse 1</div>
<div class="t" style="left:1686px;top:442px;font-size:17px;font-style:italic;font-family:'Liberation Serif',serif;color:#e0e0e0">fx</div>
<div class="t" style="left:1540px;top:482px;font-size:12.8px;color:#d8d8d8;font-weight:400;">Effects</div>
<div class="t" style="left:1562px;top:507px;font-size:12.8px;color:#d8d8d8;font-weight:400;">Stroke</div>
<div class="a" style="left:1450px;top:524px;width:272px;height:2px;background:#3c3c3c;"></div>
<div class="a" style="left:1450px;top:527px;width:272px;height:50px;background:#535353;"></div>
<div class="a" style="left:1489px;top:527px;width:1px;height:50px;background:#444;"></div>
<svg style="left:0px;top:0px;" width="1" height="1" viewBox="0 0 1 1"><path d="M1460.5,552 q8.5,-9 17,0 q-8.5,9 -17,0z" fill="#c4c4c4"/><circle cx="1469" cy="552" r="3.6" fill="#4a4a4a"/><circle cx="1469" cy="551.7" r="2.4" fill="#222"/><circle cx="1468.2" cy="550.7" r="0.8" fill="#aaa"/><rect x="1494" y="531" width="42" height="42" fill="#222"/><rect x="1496" y="533" width="38" height="38" fill="#fff"/></svg>
<div class="t" style="left:1549px;top:548px;font-size:12.8px;color:#d8d8d8;font-weight:400;">Layer 0</div>
<div class="a" style="left:1450px;top:577px;width:272px;height:1px;background:#3f3f3f;"></div>
<div class="a" style="left:1450px;top:722px;width:291px;height:1px;background:#3c3c3c;"></div>
<svg style="left:0px;top:0px;" width="1" height="1" viewBox="0 0 1 1"><rect x="1475" y="734" width="18" height="8" rx="4" fill="none" stroke="#c8c8c8" stroke-width="1.8"/><line x1="1479" y1="738" x2="1489" y2="738" stroke="#c8c8c8" stroke-width="1.8"/><polygon points="1530,744 1535,744 1532.5,746.5" fill="#c8c8c8"/><rect x="1547" y="730" width="17" height="14" fill="#c8c8c8"/><circle cx="1555.5" cy="737" r="3.8" fill="#444"/><circle cx="1590" cy="737" r="7" fill="#cfcfcf"/><path d="M1585,742 L1595,732 A7,7 0 0 1 1585,742z" fill="#6a6a6a"/><polygon points="1601,743 1605,743 1603,745.5" fill="#c8c8c8"/><path d="M1618,731 h6 l2,2 h8 v11 h-16z" fill="#c8c8c8"/><path d="M1655,730 h13 v14 h-9 l-4,-4z" fill="#c8c8c8"/><path d="M1655,740 h4 v4z" fill="#8a8a8a"/><rect x="1689" y="734" width="13" height="11" fill="none" stroke="#c8c8c8" stroke-width="1.5"/><rect x="1687" y="731.5" width="17" height="2" fill="#c8c8c8"/><rect x="1693" y="729" width="5" height="2" fill="#c8c8c8"/><line x1="1692.5" y1="736" x2="1692.5" y2="743" stroke="#c8c8c8"/><line x1="1695.5" y1="736" x2="1695.5" y2="743" stroke="#c8c8c8"/><line x1="1698.5" y1="736" x2="1698.5" y2="743" stroke="#c8c8c8"/><polygon points="1722,746 1735,746 1735,733" fill="#5e5e5e"/></svg>
<div class="t" style="left:1512px;top:729px;font-size:17px;font-style:italic;font-family:'Liberation Serif',serif;color:#c8c8c8">fx</div>
<div class="a" style="left:1583.0px;top:752px;width:1.6px;height:4px;background:#333;"></div>
<div class="a" style="left:1585.6px;top:752px;width:1.6px;height:4px;background:#333;"></div>
<div class="a" style="left:1588.2px;top:752px;width:1.6px;height:4px;background:#333;"></div>
<div class="a" style="left:1590.8px;top:752px;width:1.6px;height:4px;background:#333;"></div>
<div class="a" style="left:1593.4px;top:752px;width:1.6px;height:4px;background:#333;"></div>
<div class="a" style="left:1596.0px;top:752px;width:1.6px;height:4px;background:#333;"></div>
<div class="a" style="left:1598.6px;top:752px;width:1.6px;height:4px;background:#333;"></div>
<div class="a" style="left:1601.2px;top:752px;width:1.6px;height:4px;background:#333;"></div>
<div class="a" style="left:1603.8px;top:752px;width:1.6px;height:4px;background:#333;"></div>
<div class="a" style="left:1756.0px;top:64px;width:1.4px;height:4px;background:#3a3a3a;"></div>
<div class="a" style="left:1758.3px;top:64px;width:1.4px;height:4px;background:#3a3a3a;"></div>
<div class="a" style="left:1760.6px;top:64px;width:1.4px;height:4px;background:#3a3a3a;"></div>
<div class="a" style="left:1762.9px;top:64px;width:1.4px;height:4px;background:#3a3a3a;"></div>
<div class="a" style="left:1765.2px;top:64px;width:1.4px;height:4px;background:#3a3a3a;"></div>
<div class="a" style="left:1767.5px;top:64px;width:1.4px;height:4px;background:#3a3a3a;"></div>
<div class="a" style="left:1769.8px;top:64px;width:1.4px;height:4px;background:#3a3a3a;"></div>
<div class="a" style="left:1772.1px;top:64px;width:1.4px;height:4px;background:#3a3a3a;"></div>
<div class="a" style="left:1774.4px;top:64px;width:1.4px;height:4px;background:#3a3a3a;"></div>
<div class="a" style="left:1756.0px;top:193px;width:1.4px;height:4px;background:#3a3a3a;"></div>
<div class="a" style="left:1758.3px;top:193px;width:1.4px;height:4px;background:#3a3a3a;"></div>
<div class="a" style="left:1760.6px;top:193px;width:1.4px;height:4px;background:#3a3a3a;"></div>
<div class="a" style="left:1762.9px;top:193px;width:1.4px;height:4px;background:#3a3a3a;"></div>
<div class="a" style="left:1765.2px;top:193px;width:1.4px;height:4px;background:#3a3a3a;"></div>
<div class="a" style="left:1767.5px;top:193px;width:1.4px;height:4px;background:#3a3a3a;"></div>
<div class="a" style="left:1769.8px;top:193px;width:1.4px;height:4px;background:#3a3a3a;"></div>
<div class="a" style="left:1772.1px;top:193px;width:1.4px;height:4px;background:#3a3a3a;"></div>
<div class="a" style="left:1774.4px;top:193px;width:1.4px;height:4px;background:#3a3a3a;"></div>
<div class="a" style="left:1756.0px;top:320px;width:1.4px;height:4px;background:#3a3a3a;"></div>
<div class="a" style="left:1758.3px;top:320px;width:1.4px;height:4px;background:#3a3a3a;"></div>
<div class="a" style="left:1760.6px;top:320px;width:1.4px;height:4px;background:#3a3a3a;"></div>
<div class="a" style="left:1762.9px;top:320px;width:1.4px;height:4px;background:#3a3a3a;"></div>
<div class="a" style="left:1765.2px;top:320px;width:1.4px;height:4px;background:#3a3a3a;"></div>
<div class="a" style="left:1767.5px;top:320px;width:1.4px;height:4px;background:#3a3a3a;"></div>
<div class="a" style="left:1769.8px;top:320px;width:1.4px;height:4px;background:#3a3a3a;"></div>
<div class="a" style="left:1772.1px;top:320px;width:1.4px;height:4px;background:#3a3a3a;"></div>
<div class="a" style="left:1774.4px;top:320px;width:1.4px;height:4px;background:#3a3a3a;"></div>
<div class="a" style="left:1756.0px;top:409px;width:1.4px;height:4px;background:#3a3a3a;"></div>
<div class="a" style="left:1758.3px;top:409px;width:1.4px;height:4px;background:#3a3a3a;"></div>
<div class="a" style="left:1760.6px;top:409px;width:1.4px;height:4px;background:#3a3a3a;"></div>
<div class="a" style="left:1762.9px;top:409px;width:1.4px;height:4px;background:#3a3a3a;"></div>
<div class="a" style="left:1765.2px;top:409px;width:1.4px;height:4px;background:#3a3a3a;"></div>
<div class="a" style="left:1767.5px;top:409px;width:1.4px;height:4px;background:#3a3a3a;"></div>
<div class="a" style="left:1769.8px;top:409px;width:1.4px;height:4px;background:#3a3a3a;"></div>
<div class="a" style="left:1772.1px;top:409px;width:1.4px;height:4px;background:#3a3a3a;"></div>
<div class="a" style="left:1774.4px;top:409px;width:1.4px;height:4px;background:#3a3a3a;"></div>
<div class="a" style="left:1756.0px;top:501px;width:1.4px;height:4px;background:#3a3a3a;"></div>
<div class="a" style="left:1758.3px;top:501px;width:1.4px;height:4px;background:#3a3a3a;"></div>
<div class="a" style="left:1760.6px;top:501px;width:1.4px;height:4px;background:#3a3a3a;"></div>
<div class="a" style="left:1762.9px;top:501px;width:1.4px;height:4px;background:#3a3a3a;"></div>
<div class="a" style="left:1765.2px;top:501px;width:1.4px;height:4px;background:#3a3a3a;"></div>
<div class="a" style="left:1767.5px;top:501px;width:1.4px;height:4px;background:#3a3a3a;"></div>
<div class="a" style="left:1769.8px;top:501px;width:1.4px;height:4px;background:#3a3a3a;"></div>
<div class="a" style="left:1772.1px;top:501px;width:1.4px;height:4px;background:#3a3a3a;"></div>
<div class="a" style="left:1774.4px;top:501px;width:1.4px;height:4px;background:#3a3a3a;"></div>
<div class="a" style="left:1756.0px;top:591px;width:1.4px;height:4px;background:#3a3a3a;"></div>
<div class="a" style="left:1758.3px;top:591px;width:1.4px;height:4px;background:#3a3a3a;"></div>
<div class="a" style="left:1760.6px;top:591px;width:1.4px;height:4px;background:#3a3a3a;"></div>
<div class="a" style="left:1762.9px;top:591px;width:1.4px;height:4px;background:#3a3a3a;"></div>
<div class="a" style="left:1765.2px;top:591px;width:1.4px;height:4px;background:#3a3a3a;"></div>
<div class="a" style="left:1767.5px;top:591px;width:1.4px;height:4px;background:#3a3a3a;"></div>
<div class="a" style="left:1769.8px;top:591px;width:1.4px;height:4px;background:#3a3a3a;"></div>
<div class="a" style="left:1772.1px;top:591px;width:1.4px;height:4px;background:#3a3a3a;"></div>
<div class="a" style="left:1774.4px;top:591px;width:1.4px;height:4px;background:#3a3a3a;"></div>
<div class="a" style="left:1756.0px;top:682px;width:1.4px;height:4px;background:#3a3a3a;"></div>
<div class="a" style="left:1758.3px;top:682px;width:1.4px;height:4px;background:#3a3a3a;"></div>
<div class="a" style="left:1760.6px;top:682px;width:1.4px;height:4px;background:#3a3a3a;"></div>
<div class="a" style="left:1762.9px;top:682px;width:1.4px;height:4px;background:#3a3a3a;"></div>
<div class="a" style="left:1765.2px;top:682px;width:1.4px;height:4px;background:#3a3a3a;"></div>
<div class="a" style="left:1767.5px;top:682px;width:1.4px;height:4px;background:#3a3a3a;"></div>
<div class="a" style="left:1769.8px;top:682px;width:1.4px;height:4px;background:#3a3a3a;"></div>
<div class="a" style="left:1772.1px;top:682px;width:1.4px;height:4px;background:#3a3a3a;"></div>
<div class="a" style="left:1774.4px;top:682px;width:1.4px;height:4px;background:#3a3a3a;"></div>
<svg style="left:0px;top:0px;" width="1" height="1" viewBox="0 0 1 1"><circle cx="1769" cy="91" r="7" fill="none" stroke="#cfcfcf" stroke-width="2"/><circle cx="1769" cy="91" r="3" fill="#cfcfcf"/><line x1="1772.00" y1="91.00" x2="1781.00" y2="91.00" stroke="#cfcfcf" stroke-width="1.6"/><line x1="1771.12" y1="93.12" x2="1777.49" y2="99.49" stroke="#cfcfcf" stroke-width="1.6"/><line x1="1769.00" y1="94.00" x2="1769.00" y2="103.00" stroke="#cfcfcf" stroke-width="1.6"/><line x1="1766.88" y1="93.12" x2="1760.51" y2="99.49" stroke="#cfcfcf" stroke-width="1.6"/><line x1="1766.00" y1="91.00" x2="1757.00" y2="91.00" stroke="#cfcfcf" stroke-width="1.6"/><line x1="1766.88" y1="88.88" x2="1760.51" y2="82.51" stroke="#cfcfcf" stroke-width="1.6"/><line x1="1769.00" y1="88.00" x2="1769.00" y2="79.00" stroke="#cfcfcf" stroke-width="1.6"/><line x1="1771.12" y1="88.88" x2="1777.49" y2="82.51" stroke="#cfcfcf" stroke-width="1.6"/><circle cx="1769" cy="128" r="11" fill="#cfcfcf"/><rect x="1767.5" y="126" width="3.2" height="8" fill="#444"/><circle cx="1769" cy="122.5" r="1.8" fill="#444"/><path d="M1756,172 v-8 l2,-2 v2 l2,-4 l2,3 v-3 l2,1 l1,-4 l2,5 l2,-3 l1,2 l2,-4 l2,4 l2,1 l1,-3 l2,4 v9z" fill="#cfcfcf"/><path d="M1757,219 q0,-9 13,-9 q12,0 12,7 q0,4 -5,4 q-3,0 -3,3 q0,4 -6,4 q-11,0 -11,-9z" fill="#cfcfcf"/><circle cx="1762" cy="220" r="1.7" fill="#444"/><circle cx="1766" cy="215" r="1.7" fill="#444"/><circle cx="1772" cy="214" r="1.7" fill="#444"/><circle cx="1777" cy="216" r="1.7" fill="#444"/><circle cx="1768" cy="223" r="1.7" fill="#444"/><rect x="1759" y="246" width="6" height="6" fill="#e0e0e0"/><rect x="1766" y="246" width="6" height="6" fill="#9a9a9a"/><rect x="1773" y="246" width="6" height="6" fill="#808080"/><rect x="1759" y="253" width="6" height="6" fill="#bdbdbd"/><rect x="1766" y="253" width="6" height="6" fill="#7a7a7a"/><rect x="1773" y="253" width="6" height="6" fill="#555"/><rect x="1759" y="260" width="6" height="6" fill="#888"/><rect x="1766" y="260" width="6" height="6" fill="#444"/><rect x="1773" y="260" width="6" height="6" fill="#2a2a2a"/><rect x="1758.5" y="245.5" width="21" height="21" fill="none" stroke="#ccc" stroke-width="1"/></svg>
<div class="a" style="left:1749px;top:276px;width:37px;height:31px;background:#3c3c3c;border-radius:3px 0 0 3px"></div>
<svg style="left:0px;top:0px;" width="1" height="1" viewBox="0 0 1 1"><polygon points="1769,281 1780,288 1769,295 1758,288" fill="#cfcfcf"/><path d="M1758,293 l11,7 11,-7" fill="none" stroke="#cfcfcf" stroke-width="2.6"/><circle cx="1769" cy="344" r="10.5" fill="#cfcfcf"/><path d="M1761.6,351.4 L1776.4,336.6 A10.5,10.5 0 0 1 1761.6,351.4z" fill="#5a5a5a"/><rect x="1764" y="372" width="17" height="17" fill="#cfcfcf"/></svg>
<div class="t" style="left:1757px;top:377px;font-size:19px;font-style:italic;font-family:'Liberation Serif',serif;color:#d8d8d8;text-shadow:0 0 1px #555">fx</div>
<svg style="left:0px;top:0px;" width="1" height="1" viewBox="0 0 1 1"><rect x="1762" y="434" width="13" height="13" fill="#cfcfcf"/><path d="M1765,434 l-4,-11 M1769,434 v-14 M1773,434 l5,-10" stroke="#cfcfcf" stroke-width="2"/><circle cx="1761" cy="423" r="2.5" fill="#cfcfcf"/><circle cx="1769" cy="420" r="2.3" fill="#cfcfcf"/><circle cx="1778" cy="424" r="2.5" fill="#cfcfcf"/><path d="M1757,463 q5,-4 10,0 q-5,4 -10,0z" fill="#cfcfcf"/><rect x="1768" y="462" width="15" height="2" fill="#cfcfcf"/><rect x="1757" y="472" width="16" height="2.6" fill="#cfcfcf"/><path d="M1772,473 l9,-8 q3,8 0,17z" fill="#cfcfcf"/></svg>
<div class="t" style="left:1757px;top:515px;font-size:24px;color:#cfcfcf">A</div>
<div class="a" style="left:1777px;top:513px;width:2px;height:27px;background:#cfcfcf;"></div>
<svg style="left:0px;top:0px;" width="1" height="1" viewBox="0 0 1 1"><path d="M1772,550 h8 v25 h-2 v-23 h-2 v23 h-2 v-14 q-9,0 -9,-5.5 q0,-5.5 7,-5.5z" fill="#cfcfcf"/><circle cx="1764" cy="622" r="7" fill="#cfcfcf"/><circle cx="1774" cy="622" r="7" fill="#cfcfcf"/><circle cx="1769" cy="613" r="7" fill="#cfcfcf"/><circle cx="1769" cy="619" r="3" fill="#777"/><path d="M1760,667 q0,-17 9,-20 q9,3 9,20" fill="none" stroke="#cfcfcf" stroke-width="1.4"/><rect x="1756" y="645" width="8" height="4" fill="#cfcfcf"/><rect x="1774" y="645" width="8" height="4" fill="#cfcfcf"/><rect x="1767" y="645" width="4" height="4" fill="#cfcfcf"/><rect x="1757.5" y="664.5" width="4" height="4" fill="none" stroke="#cfcfcf"/><rect x="1776.5" y="664.5" width="4" height="4" fill="none" stroke="#cfcfcf"/><polygon points="1760,698 1779,708.5 1760,719" fill="#cfcfcf"/><rect x="1761.5" y="734.5" width="5" height="5" fill="none" stroke="#cfcfcf"/><rect x="1761.5" y="742.5" width="5" height="5" fill="none" stroke="#cfcfcf"/><rect x="1761" y="750" width="6" height="6" fill="#cfcfcf"/><path d="M1771,740 q8,-3 7,10 v6" fill="none" stroke="#cfcfcf" stroke-width="2.4"/><polygon points="1769,741 1774,735 1775,743" fill="#cfcfcf"/></svg>
<svg style="left:0px;top:0px;" width="1" height="1" viewBox="0 0 1 1"><polygon points="1084.5,325 1098,337.5 1090.5,338.5 1085.5,344" fill="#000"/><g fill="#000" stroke="#000" stroke-width="1.8"><line x1="1096.7" y1="347.3" x2="1110.7" y2="347.3"/><line x1="1103.7" y1="340.3" x2="1103.7" y2="354.3"/><polygon stroke="none" points="1095.7,347.3 1099.3,343.7 1099.3,350.90000000000003"/><polygon stroke="none" points="1111.7,347.3 1108.1000000000001,343.7 1108.1000000000001,350.90000000000003"/><polygon stroke="none" points="1103.7,339.3 1100.1000000000001,342.90000000000003 1107.3,342.90000000000003"/><polygon stroke="none" points="1103.7,355.3 1100.1000000000001,351.7 1107.3,351.7"/></g></svg>
<svg style="left:0px;top:0px;" width="1" height="1" viewBox="0 0 1 1"><circle cx="175" cy="906" r="6.5" fill="#3a3a3a" stroke="#9a9a9a" stroke-width="1.4"/><path d="M173,902 v6 h4" fill="none" stroke="#9a9a9a" stroke-width="1.3"/><polygon points="420.5,901 428,906.5 420.5,912" fill="#dcdcdc"/></svg>
</body></html>
